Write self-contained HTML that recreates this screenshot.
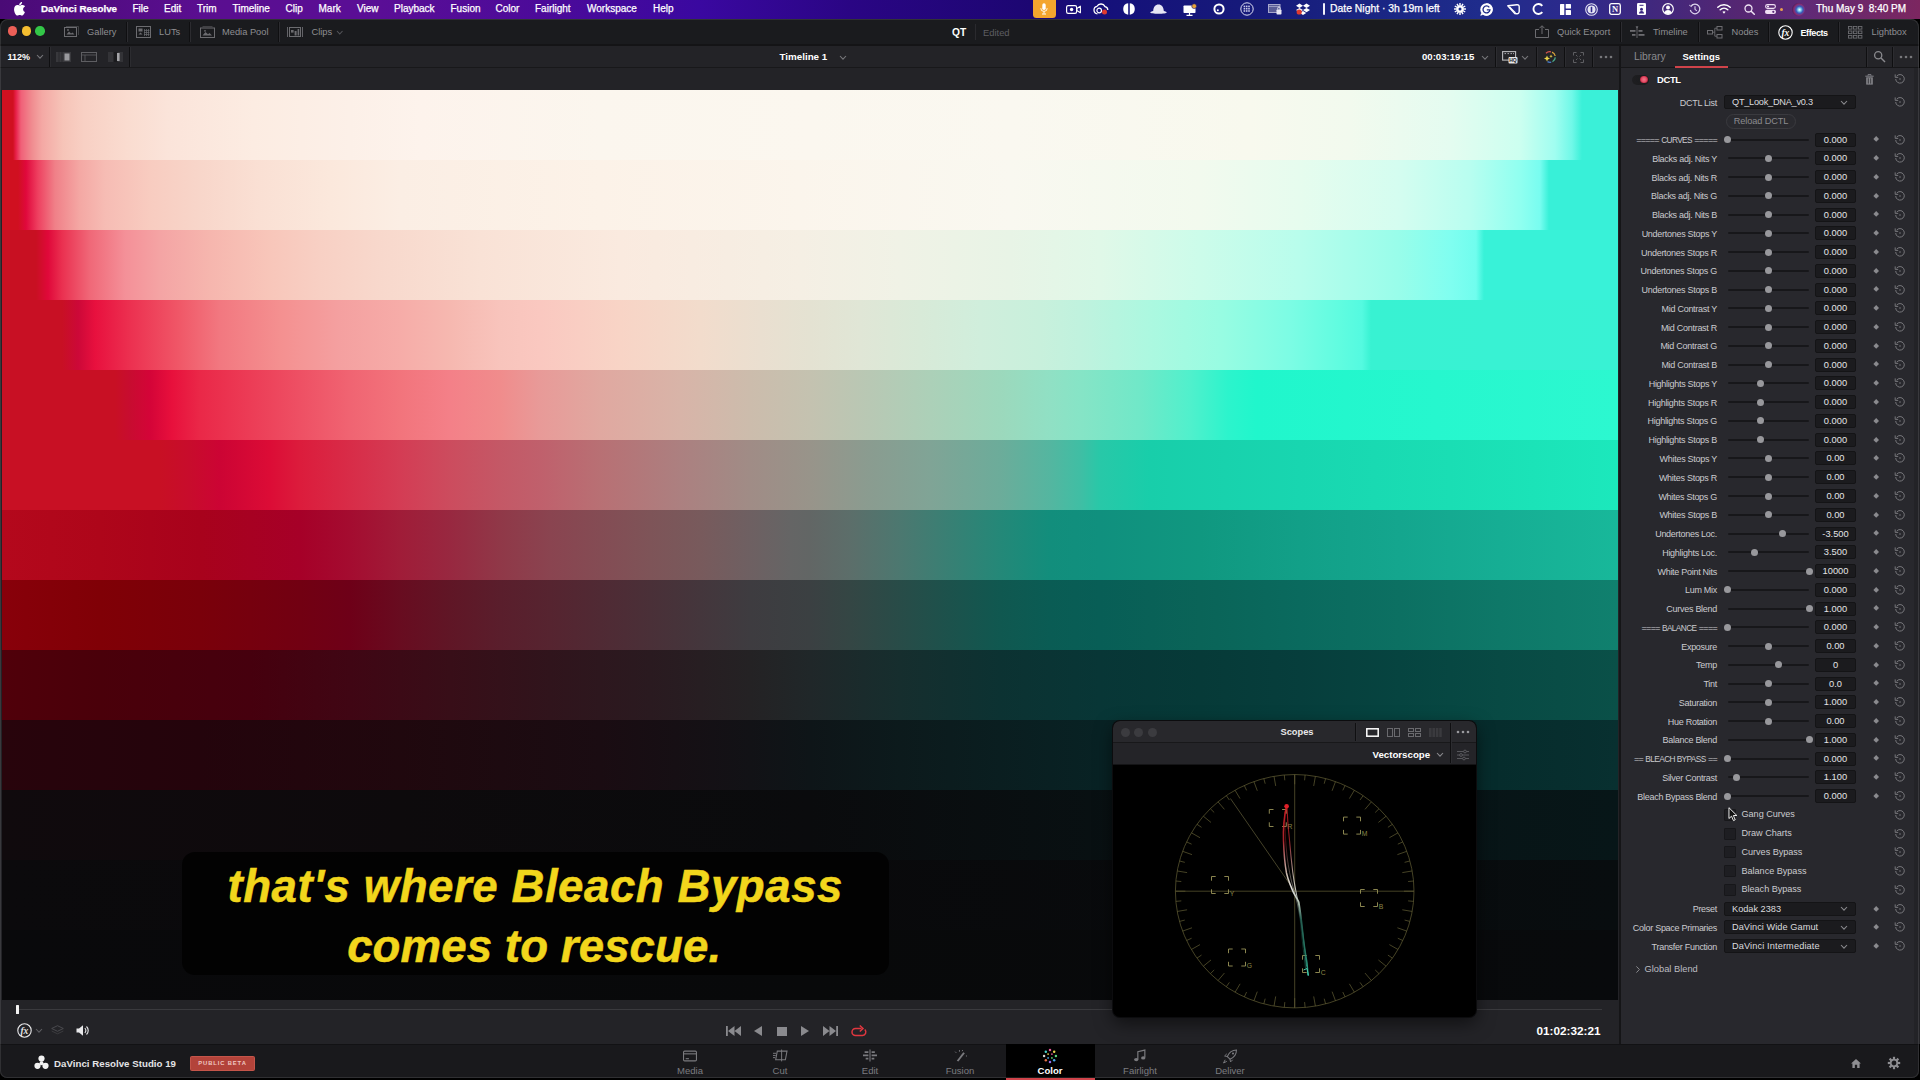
<!DOCTYPE html><html lang="en"><head><meta charset="utf-8"><title>DaVinci Resolve</title><style>
*{box-sizing:border-box;margin:0;padding:0}
html,body{width:1920px;height:1080px;overflow:hidden;background:#000}
body{font-family:"Liberation Sans",sans-serif;font-size:9.3px;color:#9a9a9e;position:relative;-webkit-font-smoothing:antialiased}
.abs{position:absolute}
.t{position:absolute;white-space:pre;line-height:1;transform:translateY(-50%)}
.w{color:#fff}
.b{font-weight:bold}
#menubar{position:absolute;left:0;top:0;width:1920px;height:19px;background:linear-gradient(90deg,#4a0a76 0,#5a0e90 200px,#5a0e96 380px,#4a0a9a 560px,#3a08a0 700px,#2a0584 850px,#1c0672 1030px,#15107a 1100px,#161a7a 1250px,#1a2684 1380px,#1f2c8c 1480px,#2c2a8c 1570px,#40287e 1650px,#552672 1740px,#5e2a78 1800px,#702868 1870px,#7c2660 1920px)}
#menubar .t{color:#fff;font-size:10px;top:9px;-webkit-text-stroke:0.25px #fff}
#win{position:absolute;left:0;top:19px;width:1919px;height:1059px;background:#1a1b1e;border-radius:8px 8px 7px 7px;overflow:hidden}
#winb{position:absolute;left:0;top:19px;width:1919px;height:1059px;border-radius:8px 8px 7px 7px;box-shadow:inset 0 0 0 1px rgba(255,255,255,0.10);pointer-events:none}
#row1{position:absolute;left:0;top:0;width:1920px;height:25px;background:#1a1b1e}
#row2{position:absolute;left:0;top:24.5px;width:1920px;height:24.5px;background:#232327;border-top:2px solid #141416;border-bottom:1px solid #18181a}
#viewbg{position:absolute;left:0;top:49px;width:1620px;height:976px;background:#232327}
#panel{position:absolute;left:1619px;top:49px;width:301px;height:976px;background:#28282d;border-left:2px solid #151517}
#panelhead{position:absolute;left:1619px;top:24.5px;width:301px;height:24.5px;background:#242428;border-left:2px solid #151517;border-top:2px solid #141416;border-bottom:1px solid #161618}
#bottom{position:absolute;left:0;top:1024.5px;width:1920px;height:36px;background:#19191c;border-top:1px solid #121214}
.sep{position:absolute;width:1px;background:#0f0f11;box-shadow:1px 0 0 #2c2c30}
.band{position:absolute;left:2px;width:1616px;height:70px}
.lbl{position:absolute;white-space:pre;line-height:1;transform:translateY(-50%);right:203px;color:#cbcbcf;font-size:9px;letter-spacing:-0.28px;text-align:right}
.trk{position:absolute;left:1728px;width:81px;height:2px;background:#17171a;border-radius:1px}
.knob{position:absolute;width:7px;height:7px;border-radius:50%;background:#98989c}
.val{position:absolute;left:1815px;width:41px;height:14px;background:#1b1b1e;border:1px solid #141416;border-radius:2px;color:#e4e4e6;font-size:9.3px;text-align:center;line-height:12px}
.dia{position:absolute;left:1874.3px;width:4.4px;height:4.4px;background:#8a8a8e;transform:rotate(45deg)}
.dd{position:absolute;left:1724px;width:132px;height:14px;background:#1b1b1e;border:1px solid #141416;border-radius:2px;color:#dcdcde;font-size:9.2px;line-height:12px;padding-left:7px;white-space:pre;letter-spacing:-0.1px}
.cb{position:absolute;left:1724px;width:12px;height:12px;background:#1e1e22;border:1px solid #17171a;border-radius:1px}
.cbl{position:absolute;white-space:pre;line-height:1;transform:translateY(-50%);left:1741.5px;color:#cbcbcf;font-size:9.1px;letter-spacing:-0.02px}
svg{position:absolute;overflow:visible}
.tab{position:absolute;top:1025px;width:90px;height:36px}
.tab .t{left:50%;transform:translate(-50%,-50%);top:27px;font-size:9.5px;color:#77777b}
</style></head><body>
<div id="menubar">
<svg style="left:14px;top:2px" width="12" height="14" viewBox="0 0 170 200"><path fill="#fff" d="M150 68c-1 1-21 12-21 37 0 29 25 39 26 39 0 1-4 14-13 27-8 12-17 23-30 23s-16-8-31-8c-15 0-20 8-32 8s-21-11-30-24C8 153 0 127 0 103c0-39 25-60 50-60 13 0 24 9 33 9 8 0 20-9 35-9 6 0 26 1 40 20zM104 31c6-7 11-17 11-28 0-1 0-3-1-4-10 0-23 7-30 15-6 7-11 17-11 28 0 2 0 3 1 4h2c9 0 21-6 28-15z"/></svg>
<span class="t b" style="left:41px;font-size:9.8px">DaVinci Resolve</span>
<span class="t" style="left:132.5px;">File</span>
<span class="t" style="left:164px;">Edit</span>
<span class="t" style="left:197px;">Trim</span>
<span class="t" style="left:232.5px;">Timeline</span>
<span class="t" style="left:285.5px;">Clip</span>
<span class="t" style="left:318.5px;">Mark</span>
<span class="t" style="left:357px;">View</span>
<span class="t" style="left:394px;">Playback</span>
<span class="t" style="left:450.5px;">Fusion</span>
<span class="t" style="left:495.5px;">Color</span>
<span class="t" style="left:535px;">Fairlight</span>
<span class="t" style="left:587px;">Workspace</span>
<span class="t" style="left:653px;">Help</span>
<div class="abs" style="left:1033px;top:0;width:22.5px;height:17.5px;border-radius:0 0 3.5px 3.5px;background:#f4a52e"></div>
<svg style="left:1040.0px;top:2.8px" width="8" height="12" viewBox="0 0 8 12"><rect x="2.3" y="0.3" width="3.4" height="6.6" rx="1.7" fill="#fff"/><path d="M0.8 5.2A3.200 3.200 0 0 0 7.200 5.200" fill="none" stroke="#fff" stroke-width="0.9"/><path d="M4 8.500V10.500M2 11H6" stroke="#fff" stroke-width="1"/></svg>
<svg style="left:1065.5px;top:4.5px" width="15" height="9" viewBox="0 0 15 9"><rect x="0.6" y="0.6" width="10" height="7.8" rx="1.6" fill="none" stroke="#fff" stroke-width="1.2"/><path d="M10.800 3.500L14.400 1.200V7.800L10.800 5.500Z" fill="none" stroke="#fff" stroke-width="1.1" stroke-linejoin="round"/><circle cx="5.600" cy="4.500" r="1.700" fill="#fff"/></svg>
<svg style="left:1093.0px;top:3.5px" width="16" height="11" viewBox="0 0 16 11"><path d="M4.500 9.800A3.800 3.800 0 0 1 4 2.300A4.500 4.500 0 0 1 12 2.600A3.500 3.500 0 0 1 14.800 6" fill="none" stroke="#fff" stroke-width="1.300"/><circle cx="6.200" cy="6.500" r="2.300" fill="none" stroke="#fff" stroke-width="1.200"/><circle cx="11.500" cy="8" r="2.500" fill="#e03a2e"/></svg>
<svg style="left:1122.8px;top:3.0px" width="12" height="12" viewBox="0 0 12 12"><path d="M5.200 0.300A5.750 5.750 0 0 0 5.200 11.700ZM6.800 0.300A5.750 5.750 0 0 1 6.800 11.700Z" fill="#fff"/></svg>
<svg style="left:1149.9px;top:4.3px" width="17" height="10" viewBox="0 0 17 10"><path d="M3.200 7C3.200 3 5.500 0.400 8.500 0.400S13.800 3 13.800 7C15.500 7.300 16.700 7.900 16.700 8.500C16.700 9.300 13 9.800 8.500 9.800S0.300 9.300 0.300 8.500C0.300 7.900 1.500 7.300 3.200 7Z" fill="#e6e6f4"/></svg>
<svg style="left:1182.5px;top:3.5px" width="14" height="12" viewBox="0 0 14 12"><rect x="0.500" y="1.500" width="12" height="7.500" rx="0.800" fill="#fff"/><path d="M6.500 9V11M3.500 11.300H9.500" stroke="#fff" stroke-width="1.200"/><circle cx="11.200" cy="2.200" r="2.400" fill="#e8a43a" stroke="#1a1470" stroke-width="0.600"/></svg>
<svg style="left:1212.8px;top:3.0px" width="12" height="12" viewBox="0 0 12 12"><circle cx="6" cy="6" r="4.600" fill="none" stroke="#fff" stroke-width="2"/><circle cx="4.800" cy="7.200" r="1" fill="#fff"/></svg>
<svg style="left:1240.0px;top:2.0px" width="14" height="14" viewBox="0 0 14 14"><circle cx="7" cy="7" r="6.200" fill="none" stroke="#e0e0f4" stroke-width="1"/><rect x="3.6" y="3.6" width="1.600" height="1.600" fill="#c8c8e8"/><rect x="5.9" y="3.6" width="1.600" height="1.600" fill="#c8c8e8"/><rect x="8.2" y="3.6" width="1.600" height="1.600" fill="#c8c8e8"/><rect x="3.6" y="5.9" width="1.600" height="1.600" fill="#c8c8e8"/><rect x="5.9" y="5.9" width="1.600" height="1.600" fill="#c8c8e8"/><rect x="8.2" y="5.9" width="1.600" height="1.600" fill="#c8c8e8"/><rect x="3.6" y="8.2" width="1.600" height="1.600" fill="#c8c8e8"/><rect x="5.9" y="8.2" width="1.600" height="1.600" fill="#c8c8e8"/><rect x="8.2" y="8.2" width="1.600" height="1.600" fill="#c8c8e8"/></svg>
<svg style="left:1267.5px;top:3.5px" width="14" height="11" viewBox="0 0 14 11"><rect x="0.500" y="0.500" width="11.500" height="8" fill="#5a5c96" stroke="#a8a8cc" stroke-width="1"/><path d="M0.500 2.500H12" stroke="#a8a8cc" stroke-width="0.800"/><rect x="8.500" y="5.500" width="5" height="5" rx="0.800" fill="#e8e8f4"/><path d="M9.700 5.500V4.300A1.300 1.300 0 0 1 12.300 4.300V5.500" fill="none" stroke="#e8e8f4" stroke-width="0.900"/></svg>
<svg style="left:1296.4px;top:3.0px" width="14" height="12" viewBox="0 0 14 12"><path d="M3.500 0.500L7 2.700L3.500 4.900L0 2.700ZM10.500 0.500L14 2.700L10.500 4.900L7 2.700ZM3.500 4.900L7 7.100L3.500 9.300L0 7.100ZM10.500 4.900L14 7.100L10.500 9.300L7 7.100ZM7 7.900L10.200 9.900L7 11.900L3.800 9.900Z" fill="#fff"/><circle cx="3.200" cy="9" r="2.600" fill="#e03a2e"/></svg>
<div class="abs" style="left:1322.5px;top:3px;width:2.600px;height:12px;border-radius:1.200px;background:#f0f0fa"></div>
<svg style="left:1454.3px;top:3.0px" width="12" height="12" viewBox="0 0 12 12"><rect x="5.300" y="0" width="1.400" height="3" fill="#fff" transform="rotate(0 6 6)"/><rect x="5.300" y="0" width="1.400" height="3" fill="#fff" transform="rotate(30 6 6)"/><rect x="5.300" y="0" width="1.400" height="3" fill="#fff" transform="rotate(60 6 6)"/><rect x="5.300" y="0" width="1.400" height="3" fill="#fff" transform="rotate(90 6 6)"/><rect x="5.300" y="0" width="1.400" height="3" fill="#fff" transform="rotate(120 6 6)"/><rect x="5.300" y="0" width="1.400" height="3" fill="#fff" transform="rotate(150 6 6)"/><rect x="5.300" y="0" width="1.400" height="3" fill="#fff" transform="rotate(180 6 6)"/><rect x="5.300" y="0" width="1.400" height="3" fill="#fff" transform="rotate(210 6 6)"/><rect x="5.300" y="0" width="1.400" height="3" fill="#fff" transform="rotate(240 6 6)"/><rect x="5.300" y="0" width="1.400" height="3" fill="#fff" transform="rotate(270 6 6)"/><rect x="5.300" y="0" width="1.400" height="3" fill="#fff" transform="rotate(300 6 6)"/><rect x="5.300" y="0" width="1.400" height="3" fill="#fff" transform="rotate(330 6 6)"/><circle cx="6" cy="6" r="3.600" fill="#fff"/><circle cx="6" cy="6" r="1.500" fill="#1c2a88"/></svg>
<svg style="left:1479.5px;top:2.5px" width="13" height="13" viewBox="0 0 13 13"><path d="M6.500 0.300A6.200 6.200 0 1 1 1.200 9.700L0.300 12.700L3.300 11.800" fill="#fff"/><circle cx="6.500" cy="6.500" r="6.200" fill="#fff"/><path d="M9.300 4.300A3.500 3.500 0 1 0 10 6.800H6.800" fill="none" stroke="#1c2a88" stroke-width="1.300"/></svg>
<svg style="left:1506.9px;top:3.5px" width="13" height="11" viewBox="0 0 13 11"><path d="M0.800 1.800L10 0.800Q12.300 0.700 12.200 3V7.500Q12 10 9.800 9.800L7.800 9.600Z" fill="none" stroke="#fff" stroke-width="1.400" stroke-linejoin="round"/><path d="M2.500 3L8.500 9" stroke="#fff" stroke-width="1.300"/></svg>
<svg style="left:1532.0px;top:3.0px" width="12" height="12" viewBox="0 0 12 12"><path d="M10.300 2.800A5 5 0 1 0 10.300 9.200" fill="none" stroke="#fff" stroke-width="1.900"/></svg>
<svg style="left:1559.8px;top:3.5px" width="11" height="11" viewBox="0 0 11 11"><rect x="0" y="0" width="4.300" height="11" rx="0.600" fill="#fff"/><rect x="5.700" y="0" width="5.300" height="4.600" rx="0.600" fill="#fff"/><rect x="5.700" y="6" width="5.300" height="5" rx="0.600" fill="#fff"/></svg>
<svg style="left:1584.8px;top:2.5px" width="13" height="13" viewBox="0 0 13 13"><circle cx="6.500" cy="6.500" r="5.800" fill="none" stroke="#e4e4f4" stroke-width="1.100"/><circle cx="6.500" cy="6.500" r="4" fill="#e4e4f4"/><rect x="5.700" y="3.800" width="1.600" height="5.400" rx="0.600" fill="#30288a"/></svg>
<svg style="left:1609.3px;top:3.0px" width="12" height="12" viewBox="0 0 12 12"><rect x="0.700" y="0.700" width="10.600" height="10.600" rx="1.800" fill="none" stroke="#fff" stroke-width="1.300"/><text x="6" y="9.200" text-anchor="middle" font-family="Liberation Serif,serif" font-weight="bold" font-size="8.500" fill="#fff">N</text></svg>
<svg style="left:1637.1px;top:3.0px" width="9" height="12" viewBox="0 0 9 12"><rect x="0" y="0" width="9" height="12" rx="1.200" fill="#fff"/><circle cx="4.500" cy="6.300" r="1.500" fill="#3a2884"/><path d="M2 10.500A2.500 2.500 0 0 1 7 10.500Z" fill="#3a2884"/><rect x="2.500" y="1.800" width="4" height="1" fill="#3a2884"/></svg>
<svg style="left:1661.7px;top:3.0px" width="12" height="12" viewBox="0 0 12 12"><circle cx="6" cy="6" r="5.300" fill="none" stroke="#fff" stroke-width="1.200"/><circle cx="6" cy="4.600" r="2" fill="#fff"/><path d="M2.300 9.500A4 4 0 0 1 9.700 9.500A5.300 5.300 0 0 1 2.300 9.500Z" fill="#fff"/></svg>
<svg style="left:1688.7px;top:3.0px" width="12" height="12" viewBox="0 0 12 12"><path d="M2.200 3A4.800 4.800 0 1 1 1.300 7" fill="none" stroke="#dcd4ec" stroke-width="1.200"/><path d="M0.300 2.200L2.400 3.600L3.400 1.300" fill="none" stroke="#dcd4ec" stroke-width="1"/><path d="M6 3.300V6.300L7.800 7.800" fill="none" stroke="#dcd4ec" stroke-width="1.100"/></svg>
<svg style="left:1716.6px;top:4.3px" width="14" height="10" viewBox="0 0 14 10"><path d="M0.800 3.300A9 9 0 0 1 13.200 3.300" fill="none" stroke="#fff" stroke-width="1.500" stroke-linecap="round"/><path d="M3.200 5.700A5.600 5.600 0 0 1 10.800 5.700" fill="none" stroke="#fff" stroke-width="1.500" stroke-linecap="round"/><path d="M5.400 7.800A2.500 2.500 0 0 1 8.600 7.800L7 9.700Z" fill="#fff"/></svg>
<svg style="left:1744.0px;top:3.5px" width="11" height="11" viewBox="0 0 11 11"><circle cx="4.500" cy="4.500" r="3.500" fill="none" stroke="#f0e4f4" stroke-width="1.300"/><path d="M7.200 7.200L10.300 10.300" stroke="#f0e4f4" stroke-width="1.500" stroke-linecap="round"/></svg>
<svg style="left:1765.0px;top:4.0px" width="11" height="10" viewBox="0 0 11 10"><rect x="0.600" y="0.600" width="9.800" height="3.800" rx="1.900" fill="none" stroke="#f0e0f4" stroke-width="1.100"/><circle cx="3" cy="2.500" r="1.100" fill="#f0e0f4"/><rect x="0" y="5.700" width="11" height="4.300" rx="2.100" fill="#f0e0f4"/><circle cx="8.300" cy="7.850" r="1.100" fill="#5a2a78"/></svg>
<div class="abs" style="left:1779.500px;top:7.500px;width:3px;height:3px;border-radius:50%;background:#e8a050"></div>
<div class="abs" style="left:1791.500px;top:2.500px;width:13px;height:13px;border-radius:50%;background:radial-gradient(circle at 58% 52%,#fff 0,#8ad8f0 14%,#3a5ab8 34%,#8a2a70 56%,#2a1850 82%)"></div>
<span class="t" style="left:1330px;font-size:10.4px">Date Night · 3h 19m left</span>
<span class="t" style="left:1816px;font-size:10px">Thu May 9  8:40 PM</span>
</div>
<div id="win">
<div id="row1"></div><div id="row2"></div><div id="viewbg"></div><div id="panelhead"></div><div id="panel"></div>
<div class="band" style="top:71px;background:linear-gradient(90deg,#d01020 0px,#d01020 11px,#e8204a 14px,#f06078 19px,#f08c90 30px,#f4a8a4 40px,#f6c4b8 61px,#f8d0c4 82px,#fadcd0 125px,#fbe4da 167px,#fcece2 251px,#fcf0e8 348px,#fdf3ec 418px,#fbf6ee 598px,#fbf7ef 808px,#faf8f0 1008px,#f8f9ee 1248px,#f2faee 1348px,#e4fcf0 1448px,#ccfff0 1518px,#a0fdf0 1553px,#70f8e8 1570px,#3af0d8 1580px,#3af0d8 1615px)"></div>
<div class="band" style="top:141px;background:linear-gradient(90deg,#d01020 0px,#d01020 16px,#e0083c 24px,#ee4060 36px,#f08088 53px,#f4a8a4 78px,#f6bcb4 103px,#f8ccc0 148px,#f8d6ca 198px,#fae0d4 258px,#fbe8dc 328px,#fbeee4 398px,#fcf2e8 598px,#fbf5ec 798px,#f9f8f0 1008px,#f2faee 1198px,#e6fcee 1298px,#d4fdf0 1398px,#b8fef0 1468px,#90fff0 1518px,#78fdf0 1538px,#38f0d8 1547px,#38f0d8 1615px)"></div>
<div class="band" style="top:211px;background:linear-gradient(90deg,#c81022 0px,#c81022 34px,#e0083a 46px,#ea3050 60px,#f06878 88px,#f49098 123px,#f4a4a4 158px,#f6b6ae 208px,#f8c6ba 268px,#f8d0c4 318px,#f8d8cc 378px,#f9e2d6 478px,#faeadf 618px,#f5efe4 798px,#f0f2e6 898px,#e8f4e6 1008px,#e0f8e8 1098px,#ccfcea 1198px,#b8fdec 1298px,#98fdea 1398px,#80fef0 1448px,#70fdee 1474px,#38f2d8 1482px,#38f2d8 1615px)"></div>
<div class="band" style="top:281px;background:linear-gradient(90deg,#c81024 0px,#c81024 60px,#cc0838 76px,#e8103e 93px,#ec3050 128px,#f05868 178px,#f27880 218px,#f49090 278px,#f4a0a0 338px,#f6aca8 398px,#f6b8b0 448px,#f8c4bc 498px,#fac8c0 538px,#f8d4c6 618px,#f2dccc 698px,#eadfd0 758px,#e4e2d2 808px,#e0e6d6 858px,#d8ead8 918px,#d0eedc 978px,#c8f0dc 1038px,#c0f2de 1078px,#acf8e0 1148px,#98fce2 1218px,#7cfce4 1288px,#60fce0 1338px,#54fae0 1360px,#38f2d2 1369px,#38f2d4 1615px)"></div>
<div class="band" style="top:351px;background:linear-gradient(90deg,#c81024 0px,#c81024 113px,#c80c30 128px,#d40438 148px,#e8103c 170px,#ea2848 198px,#ec3c56 248px,#ee5064 298px,#f06472 348px,#f2747c 398px,#f48088 448px,#f08c8c 498px,#e89a98 538px,#e0a8a0 598px,#d8b4a8 678px,#ccbcac 748px,#c4c2b0 808px,#b8c8b4 868px,#acd0b8 928px,#9cd8bc 998px,#90e0c4 1048px,#86e4c6 1078px,#70e8c8 1138px,#50f0cc 1188px,#2cf4cc 1226px,#20f6cc 1254px,#2cf8d0 1615px)"></div>
<div class="band" style="top:421px;background:linear-gradient(90deg,#c81024 0px,#c81024 158px,#c80c2c 188px,#cc0434 218px,#dc0c36 268px,#dc1c3c 298px,#d82c48 348px,#d43c54 398px,#cc4c5e 448px,#c45866 498px,#c0606c 538px,#b87074 598px,#ac8080 678px,#a08c86 748px,#98948a 808px,#8a9c90 868px,#80a496 928px,#6cac9a 998px,#54b6a0 1048px,#40bea4 1078px,#28c8a8 1098px,#18ceaa 1148px,#18d6b0 1298px,#1adeb4 1448px,#1ce8bc 1615px)"></div>
<div class="band" style="top:491px;background:linear-gradient(90deg,#b4081c 0px,#ae061a 98px,#a8021c 198px,#a60028 298px,#a40c30 348px,#a01c38 398px,#982840 448px,#903848 498px,#8a4450 548px,#844c54 598px,#7e5458 648px,#785a5c 698px,#6e6062 748px,#656565 788px,#626665 808px,#5c6e6a 848px,#4c7870 898px,#388074 948px,#248878 998px,#128e7c 1048px,#10907e 1098px,#109880 1198px,#12a088 1298px,#14a68e 1398px,#16ae94 1498px,#18b89a 1615px)"></div>
<div class="band" style="top:561px;background:linear-gradient(90deg,#88000a 0px,#800006 98px,#7a000a 198px,#720012 298px,#6e0018 348px,#680c20 398px,#601626 448px,#5a1e2c 498px,#562430 548px,#502a34 598px,#4a3038 648px,#44363c 698px,#3e3c40 748px,#3b4042 808px,#344644 848px,#284c48 898px,#1c524c 948px,#105850 998px,#0a5c54 1048px,#085e56 1098px,#0a6458 1198px,#0a6a5e 1298px,#0c7062 1398px,#0e7868 1498px,#10806e 1615px)"></div>
<div class="band" style="top:631px;background:linear-gradient(90deg,#50000a 0px,#4a000a 98px,#46000e 248px,#400614 348px,#380e18 448px,#30141c 548px,#2a1a20 648px,#242224 748px,#202729 808px,#162e2e 898px,#0c3232 998px,#083636 1098px,#063a38 1198px,#063e3c 1298px,#064440 1398px,#084a44 1498px,#0a5048 1615px)"></div>
<div class="band" style="top:701px;background:linear-gradient(90deg,#28040c 0px,#24040c 198px,#20080e 398px,#1a0c12 598px,#121216 748px,#0e1518 808px,#0c1a1c 898px,#0a1e20 998px,#082224 1098px,#082628 1198px,#062c2c 1498px,#083030 1615px)"></div>
<div class="band" style="top:771px;background:linear-gradient(90deg,#100a0d 0px,#0d0a0c 398px,#0a0b0d 808px,#081214 1198px,#071618 1615px)"></div>
<div class="band" style="top:841px;background:linear-gradient(90deg,#0b0a0c 0px,#09090b 808px,#080d0f 1615px)"></div>
<div class="band" style="top:911px;background:linear-gradient(90deg,#09090b 0px,#08090a 808px,#080a0c 1615px)"></div>
<!--VIEWER-OVERLAYS-->
<div id="bottom"></div>
</div>
<div class="abs" style="left:7.7px;top:26.2px;width:9.6px;height:9.6px;border-radius:50%;background:#ec5f57"></div>
<div class="abs" style="left:21.5px;top:26.2px;width:9.6px;height:9.6px;border-radius:50%;background:#f4bd30"></div>
<div class="abs" style="left:35.2px;top:26.2px;width:9.6px;height:9.6px;border-radius:50%;background:#33c748"></div>
<svg style="left:64px;top:26px" width="15" height="12" viewBox="0 0 15 12"><rect x="0.5" y="1.5" width="12" height="9" fill="none" stroke="#6c6c70"/><path d="M2 0.5H14.5V9" fill="none" stroke="#6c6c70" stroke-width="0.8" opacity=".6"/><path d="M2.5 8.5L5 5.5L7 7.5L8.5 6.5L10.5 8.5Z" fill="#6c6c70"/><circle cx="4" cy="4" r="0.9" fill="#6c6c70"/></svg>
<span class="t" style="left:87px;top:32.5px;color:#8e8e92">Gallery</span>
<div class="sep" style="left:126px;top:22px;height:20px"></div>
<svg style="left:136px;top:26px" width="15" height="12" viewBox="0 0 15 12"><rect x="0.5" y="0.5" width="14" height="11" fill="none" stroke="#6c6c70"/><rect x="2.5" y="2.5" width="4" height="3" fill="#6c6c70"/><path d="M2.5 8.5L4.5 6.5L6.5 8.5Z" fill="#6c6c70"/><path d="M8.5 3V10M10.5 3V10M12.5 3V10M8 4.5H13.5M8 6.5H13.5M8 8.5H13.5" stroke="#6c6c70" stroke-width="0.7"/></svg>
<span class="t" style="left:159px;top:32.5px;color:#8e8e92">LUTs</span>
<div class="sep" style="left:189px;top:22px;height:20px"></div>
<svg style="left:200px;top:26px" width="15" height="12" viewBox="0 0 15 12"><path d="M2.5 0.5H12.5" stroke="#6c6c70" stroke-width="0.8" opacity=".6"/><rect x="0.5" y="2" width="14" height="9.5" fill="none" stroke="#6c6c70"/><path d="M2.5 9.5L5.5 6L8 8.3L9.5 7L12 9.5Z" fill="#6c6c70"/><circle cx="5" cy="4.8" r="0.9" fill="#6c6c70"/></svg>
<span class="t" style="left:222px;top:32.5px;color:#8e8e92">Media Pool</span>
<div class="sep" style="left:278px;top:22px;height:20px"></div>
<svg style="left:287px;top:26px" width="16" height="12" viewBox="0 0 16 12"><path d="M0.5 1V11M15.5 1V11" stroke="#6c6c70" stroke-width="0.9"/><rect x="2.5" y="1.5" width="11" height="9" fill="none" stroke="#6c6c70"/><rect x="4" y="4" width="2.6" height="2.6" fill="#6c6c70"/><rect x="7.6" y="5" width="2" height="4.5" fill="#6c6c70"/><rect x="10.6" y="3" width="1.6" height="6.5" fill="#6c6c70"/></svg>
<span class="t" style="left:311.5px;top:32.5px;color:#8e8e92">Clips</span>
<svg style="left:337.25px;top:31.299999999999997px" width="5.5" height="3" viewBox="0 0 5.5 3"><path d="M0 0L2.75 3L5.5 0" fill="none" stroke="#55555a" stroke-width="1.1"/></svg>
<span class="t b w" style="left:952px;top:32.5px;font-size:10.2px">QT</span>
<div class="abs" style="left:975px;top:24px;width:1px;height:16px;background:#2a2a2e"></div>
<span class="t" style="left:983px;top:32.5px;color:#5e5e62;font-size:9.4px">Edited</span>
<svg style="left:1534.5px;top:25px" width="14" height="13" viewBox="0 0 14 13"><path d="M4 4.5H0.5V12.5H13.5V4.5H10" fill="none" stroke="#6c6c70"/><path d="M7 9V1M4.5 3.2L7 0.7L9.5 3.2" fill="none" stroke="#6c6c70"/></svg>
<span class="t" style="left:1557px;top:32.5px;color:#8e8e92">Quick Export</span>
<div class="sep" style="left:1620px;top:22px;height:20px"></div>
<svg style="left:1629px;top:26px" width="16" height="12" viewBox="0 0 16 12"><path d="M8 0V12" stroke="#6c6c70" stroke-width="0.9"/><path d="M6.5 0.5H9.5L8 2.5Z" fill="#6c6c70"/><rect x="1" y="4" width="5.5" height="1.8" fill="#6c6c70"/><rect x="9.5" y="4" width="4" height="1.8" fill="#6c6c70"/><rect x="3" y="8" width="3.5" height="1.8" fill="#6c6c70"/><rect x="9.5" y="8" width="6" height="1.8" fill="#6c6c70"/></svg>
<span class="t" style="left:1653px;top:32.5px;color:#8e8e92">Timeline</span>
<div class="sep" style="left:1698px;top:22px;height:20px"></div>
<svg style="left:1707px;top:25.5px" width="16" height="13" viewBox="0 0 16 13"><rect x="0.5" y="4.5" width="5" height="3.5" fill="none" stroke="#6c6c70"/><rect x="10" y="0.5" width="5" height="3.5" fill="none" stroke="#6c6c70"/><rect x="10" y="8.5" width="5" height="3.5" fill="none" stroke="#6c6c70"/><path d="M5.5 6.2H7.8V2.2H10M7.8 6.2V10.2H10" fill="none" stroke="#6c6c70" stroke-width="0.9"/></svg>
<span class="t" style="left:1731.5px;top:32.5px;color:#8e8e92">Nodes</span>
<div class="sep" style="left:1768px;top:22px;height:20px"></div>
<svg style="left:1777.5px;top:25px" width="15" height="15" viewBox="0 0 15 15"><circle cx="7.5" cy="7.5" r="6.7" fill="none" stroke="#fff" stroke-width="1.1"/><text x="7.4" y="10.6" text-anchor="middle" font-family="Liberation Serif,serif" font-style="italic" font-weight="bold" font-size="9.5" fill="#fff">fx</text></svg>
<span class="t b w" style="left:1800.5px;top:32.5px;font-size:9px;letter-spacing:-0.4px">Effects</span>
<div class="sep" style="left:1838px;top:22px;height:20px"></div>
<svg style="left:1848px;top:25.5px" width="15" height="13" viewBox="0 0 15 13"><rect x="0.5" y="0.5" width="3.4" height="2.6" fill="none" stroke="#6c6c70" stroke-width="0.9"/><rect x="5.5" y="0.5" width="3.4" height="2.6" fill="none" stroke="#6c6c70" stroke-width="0.9"/><rect x="10.5" y="0.5" width="3.4" height="2.6" fill="none" stroke="#6c6c70" stroke-width="0.9"/><rect x="0.5" y="5.0" width="3.4" height="2.6" fill="none" stroke="#6c6c70" stroke-width="0.9"/><rect x="5.5" y="5.0" width="3.4" height="2.6" fill="none" stroke="#6c6c70" stroke-width="0.9"/><rect x="10.5" y="5.0" width="3.4" height="2.6" fill="none" stroke="#6c6c70" stroke-width="0.9"/><rect x="0.5" y="9.5" width="3.4" height="2.6" fill="none" stroke="#6c6c70" stroke-width="0.9"/><rect x="5.5" y="9.5" width="3.4" height="2.6" fill="none" stroke="#6c6c70" stroke-width="0.9"/><rect x="10.5" y="9.5" width="3.4" height="2.6" fill="none" stroke="#6c6c70" stroke-width="0.9"/></svg>
<span class="t" style="left:1871.5px;top:32.5px;color:#8e8e92">Lightbox</span>
<span class="t b w" style="left:7.5px;top:57px;font-size:9px">112%</span>
<svg style="left:37.0px;top:55.4px" width="6" height="3.2" viewBox="0 0 6 3.2"><path d="M0 0L3.0 3.2L6 0" fill="none" stroke="#77777b" stroke-width="1.1"/></svg>
<div class="sep" style="left:48.5px;top:47px;height:20px"></div>
<svg style="left:56px;top:51.5px" width="15" height="10" viewBox="0 0 15 10"><rect x="0" y="0" width="15" height="10" fill="#38383c"/><path d="M3 0V10M6 0V10" stroke="#232327" stroke-width="0.7"/><rect x="8.5" y="1.5" width="5" height="7" fill="#9a9a9e"/></svg>
<svg style="left:81px;top:51.5px" width="16" height="10" viewBox="0 0 16 10"><rect x="0.5" y="0.5" width="15" height="9" fill="none" stroke="#5e5e62"/><path d="M0.5 3H15.5M4 3V9.5" stroke="#5e5e62" stroke-width="0.8"/></svg>
<svg style="left:108px;top:51.5px" width="15" height="10" viewBox="0 0 15 10"><rect x="0" y="0" width="15" height="10" fill="#333337"/><rect x="5.5" y="0" width="4" height="10" fill="#1a1a1d"/><rect x="9" y="1" width="2.6" height="8" fill="#a4a4a8"/></svg>
<div class="sep" style="left:129px;top:47px;height:20px"></div>
<span class="t b w" style="left:779.5px;top:57px;font-size:9.8px">Timeline 1</span>
<svg style="left:840.0px;top:55.699999999999996px" width="6" height="3.2" viewBox="0 0 6 3.2"><path d="M0 0L3.0 3.2L6 0" fill="none" stroke="#77777b" stroke-width="1.1"/></svg>
<span class="t b w" style="left:1422px;top:57px;font-size:9.6px">00:03:19:15</span>
<svg style="left:1482.0px;top:55.699999999999996px" width="6" height="3.2" viewBox="0 0 6 3.2"><path d="M0 0L3.0 3.2L6 0" fill="none" stroke="#77777b" stroke-width="1.1"/></svg>
<div class="sep" style="left:1495px;top:47px;height:20px"></div>
<svg style="left:1502px;top:50.5px" width="16" height="13" viewBox="0 0 16 13"><rect x="0.6" y="0.6" width="13" height="8.5" fill="none" stroke="#b8b8bc" stroke-width="1.1"/><path d="M2.5 2.6H4M5.5 2.6H7M8.5 2.6H10M11 2.6H12" stroke="#b8b8bc" stroke-width="0.9"/><rect x="6.5" y="6" width="9" height="6.5" rx="1" fill="#e8e8ea"/><text x="11" y="11.3" text-anchor="middle" font-family="Liberation Sans,sans-serif" font-weight="bold" font-size="5" fill="#222">HQ</text></svg>
<svg style="left:1522.0px;top:55.699999999999996px" width="6" height="3.2" viewBox="0 0 6 3.2"><path d="M0 0L3.0 3.2L6 0" fill="none" stroke="#77777b" stroke-width="1.1"/></svg>
<div class="sep" style="left:1536px;top:47px;height:20px"></div>
<svg style="left:1543px;top:50px" width="14" height="14" viewBox="0 0 14 14"><path d="M3 3.2A5.3 5.3 0 0 1 8 1.8" fill="none" stroke="#d9534f" stroke-width="1.3"/><path d="M9 2.1A5.3 5.3 0 0 1 12.2 6" fill="none" stroke="#d8a13a" stroke-width="1.3"/><path d="M12.3 7.4A5.3 5.3 0 0 1 9.5 11.7" fill="none" stroke="#4aa88a" stroke-width="1.3"/><path d="M8.2 12.2A5.3 5.3 0 0 1 4.5 11.6" fill="none" stroke="#4a7fd0" stroke-width="1.3"/><path d="M4 5.5L4.9 7.6L7 8.5L4.9 9.4L4 11.5L3.1 9.4L1 8.5L3.1 7.6Z" fill="#e8d24a"/><path d="M8 4.5L8.5 5.7L9.7 6.2L8.5 6.7L8 7.9L7.5 6.7L6.3 6.2L7.5 5.7Z" fill="#e8d24a"/></svg>
<div class="sep" style="left:1564px;top:47px;height:20px"></div>
<svg style="left:1572.5px;top:51.5px" width="11" height="11" viewBox="0 0 11 11"><path d="M0.5 3.5V0.5H3.5M7.5 0.5H10.5V3.5M10.5 7.5V10.5H7.5M3.5 10.5H0.5V7.5" fill="none" stroke="#5e5e62" stroke-width="1"/><path d="M3 3L4.5 4.5M8 3L6.5 4.5M8 8L6.5 6.5M3 8L4.5 6.5" stroke="#5e5e62" stroke-width="1"/></svg>
<div class="sep" style="left:1592px;top:47px;height:20px"></div>
<svg style="left:1599px;top:55px" width="14" height="4" viewBox="0 0 14 4"><circle cx="2" cy="2" r="1.3" fill="#77777b"/><circle cx="7" cy="2" r="1.3" fill="#77777b"/><circle cx="12" cy="2" r="1.3" fill="#77777b"/></svg>
<span class="t" style="left:1634px;top:56.5px;font-size:10.4px;color:#8a8a8e">Library</span>
<span class="t b w" style="left:1682.5px;top:56.5px;font-size:9.5px">Settings</span>
<div class="abs" style="left:1675px;top:66px;width:53px;height:2px;background:#d0434a"></div>
<div class="sep" style="left:1866px;top:47px;height:20px"></div>
<div class="sep" style="left:1892px;top:47px;height:20px"></div>
<svg style="left:1873px;top:50px" width="13" height="13" viewBox="0 0 13 13"><circle cx="5.2" cy="5.2" r="3.6" fill="none" stroke="#8a8a8e" stroke-width="1.3"/><path d="M8 8L12 12" stroke="#8a8a8e" stroke-width="1.5"/></svg>
<svg style="left:1899px;top:55px" width="14" height="4" viewBox="0 0 14 4"><circle cx="2" cy="2" r="1.3" fill="#77777b"/><circle cx="7" cy="2" r="1.3" fill="#77777b"/><circle cx="12" cy="2" r="1.3" fill="#77777b"/></svg>
<div class="abs" style="left:1632px;top:74.5px;width:17px;height:10px;border-radius:5px;background:linear-gradient(90deg,#1e1e21,#1a1a1c)"></div>
<div class="abs" style="left:1640px;top:75.7px;width:7.6px;height:7.6px;border-radius:50%;background:radial-gradient(circle,#f0788a 0,#e8506a 45%,#b02038 75%,#601020 100%)"></div>
<span class="t b w" style="left:1657px;top:79.6px;font-size:9.4px;letter-spacing:-0.3px">DCTL</span>
<svg style="left:1865px;top:74px" width="9" height="11" viewBox="0 0 9 11"><path d="M0.3 2.200H8.700" stroke="#85858a" stroke-width="1"/><path d="M3 1.700V0.600H6V1.700" fill="none" stroke="#85858a" stroke-width="0.900"/><path d="M1.200 3.300H7.800V10.600H1.200Z" fill="#85858a"/><path d="M3.300 4.300V9.600M5.700 4.300V9.600" stroke="#28282d" stroke-width="0.800"/></svg>
<svg style="left:1893.5px;top:73px" width="12" height="12" viewBox="0 0 12 12"><path d="M2.6 3.2A4.3 4.3 0 1 1 1.7 6" fill="none" stroke="#77777b" stroke-width="1"/><path d="M1.2 1.4V4.4H4.2" fill="none" stroke="#77777b" stroke-width="1"/><circle cx="6" cy="6" r="0.8" fill="#77777b"/></svg>
<span class="lbl" style="top:102.5px">DCTL List</span>
<div class="dd" style="top:95.0px;letter-spacing:-0.25px">QT_Look_DNA_v0.3</div>
<svg style="left:1841.0px;top:100.7px" width="6" height="3.2" viewBox="0 0 6 3.2"><path d="M0 0L3.0 3.2L6 0" fill="none" stroke="#8a8a8e" stroke-width="1.1"/></svg>
<svg style="left:1893.5px;top:96.0px" width="12" height="12" viewBox="0 0 12 12"><path d="M2.6 3.2A4.3 4.3 0 1 1 1.7 6" fill="none" stroke="#77777b" stroke-width="1"/><path d="M1.2 1.4V4.4H4.2" fill="none" stroke="#77777b" stroke-width="1"/><circle cx="6" cy="6" r="0.8" fill="#77777b"/></svg>
<div class="abs" style="left:1726px;top:113.96000000000001px;width:70px;height:15px;border:1px solid #3a3a3f;border-radius:7.5px;background:#2a2a2f;color:#8c8c90;font-size:9.2px;line-height:13px;text-align:center;letter-spacing:-0.1px">Reload DCTL</div>
<span class="lbl" style="top:140.0px"><span style='letter-spacing:-0.7px'>=====</span> <span style='font-size:8.3px;letter-spacing:-0.6px'>CURVES</span> <span style='letter-spacing:-0.7px'>=====</span></span>
<div class="trk" style="top:138.5px"></div>
<div class="knob" style="left:1723.9px;top:136.0px"></div>
<div class="val" style="top:132.5px">0.000</div>
<div class="dia" style="top:137.3px"></div>
<svg style="left:1893.5px;top:133.5px" width="12" height="12" viewBox="0 0 12 12"><path d="M2.6 3.2A4.3 4.3 0 1 1 1.7 6" fill="none" stroke="#77777b" stroke-width="1"/><path d="M1.2 1.4V4.4H4.2" fill="none" stroke="#77777b" stroke-width="1"/><circle cx="6" cy="6" r="0.8" fill="#77777b"/></svg>
<span class="lbl" style="top:158.8px">Blacks adj. Nits Y</span>
<div class="trk" style="top:157.3px"></div>
<div class="knob" style="left:1765.2px;top:154.8px"></div>
<div class="val" style="top:151.3px">0.000</div>
<div class="dia" style="top:156.1px"></div>
<svg style="left:1893.5px;top:152.3px" width="12" height="12" viewBox="0 0 12 12"><path d="M2.6 3.2A4.3 4.3 0 1 1 1.7 6" fill="none" stroke="#77777b" stroke-width="1"/><path d="M1.2 1.4V4.4H4.2" fill="none" stroke="#77777b" stroke-width="1"/><circle cx="6" cy="6" r="0.8" fill="#77777b"/></svg>
<span class="lbl" style="top:177.5px">Blacks adj. Nits R</span>
<div class="trk" style="top:176.0px"></div>
<div class="knob" style="left:1765.2px;top:173.5px"></div>
<div class="val" style="top:170.0px">0.000</div>
<div class="dia" style="top:174.8px"></div>
<svg style="left:1893.5px;top:171.0px" width="12" height="12" viewBox="0 0 12 12"><path d="M2.6 3.2A4.3 4.3 0 1 1 1.7 6" fill="none" stroke="#77777b" stroke-width="1"/><path d="M1.2 1.4V4.4H4.2" fill="none" stroke="#77777b" stroke-width="1"/><circle cx="6" cy="6" r="0.8" fill="#77777b"/></svg>
<span class="lbl" style="top:196.3px">Blacks adj. Nits G</span>
<div class="trk" style="top:194.8px"></div>
<div class="knob" style="left:1765.2px;top:192.3px"></div>
<div class="val" style="top:188.8px">0.000</div>
<div class="dia" style="top:193.6px"></div>
<svg style="left:1893.5px;top:189.8px" width="12" height="12" viewBox="0 0 12 12"><path d="M2.6 3.2A4.3 4.3 0 1 1 1.7 6" fill="none" stroke="#77777b" stroke-width="1"/><path d="M1.2 1.4V4.4H4.2" fill="none" stroke="#77777b" stroke-width="1"/><circle cx="6" cy="6" r="0.8" fill="#77777b"/></svg>
<span class="lbl" style="top:215.1px">Blacks adj. Nits B</span>
<div class="trk" style="top:213.6px"></div>
<div class="knob" style="left:1765.2px;top:211.1px"></div>
<div class="val" style="top:207.6px">0.000</div>
<div class="dia" style="top:212.4px"></div>
<svg style="left:1893.5px;top:208.6px" width="12" height="12" viewBox="0 0 12 12"><path d="M2.6 3.2A4.3 4.3 0 1 1 1.7 6" fill="none" stroke="#77777b" stroke-width="1"/><path d="M1.2 1.4V4.4H4.2" fill="none" stroke="#77777b" stroke-width="1"/><circle cx="6" cy="6" r="0.8" fill="#77777b"/></svg>
<span class="lbl" style="top:233.8px">Undertones Stops Y</span>
<div class="trk" style="top:232.3px"></div>
<div class="knob" style="left:1765.2px;top:229.8px"></div>
<div class="val" style="top:226.3px">0.000</div>
<div class="dia" style="top:231.1px"></div>
<svg style="left:1893.5px;top:227.3px" width="12" height="12" viewBox="0 0 12 12"><path d="M2.6 3.2A4.3 4.3 0 1 1 1.7 6" fill="none" stroke="#77777b" stroke-width="1"/><path d="M1.2 1.4V4.4H4.2" fill="none" stroke="#77777b" stroke-width="1"/><circle cx="6" cy="6" r="0.8" fill="#77777b"/></svg>
<span class="lbl" style="top:252.6px">Undertones Stops R</span>
<div class="trk" style="top:251.1px"></div>
<div class="knob" style="left:1765.2px;top:248.6px"></div>
<div class="val" style="top:245.1px">0.000</div>
<div class="dia" style="top:249.9px"></div>
<svg style="left:1893.5px;top:246.1px" width="12" height="12" viewBox="0 0 12 12"><path d="M2.6 3.2A4.3 4.3 0 1 1 1.7 6" fill="none" stroke="#77777b" stroke-width="1"/><path d="M1.2 1.4V4.4H4.2" fill="none" stroke="#77777b" stroke-width="1"/><circle cx="6" cy="6" r="0.8" fill="#77777b"/></svg>
<span class="lbl" style="top:271.3px">Undertones Stops G</span>
<div class="trk" style="top:269.8px"></div>
<div class="knob" style="left:1765.2px;top:267.3px"></div>
<div class="val" style="top:263.8px">0.000</div>
<div class="dia" style="top:268.6px"></div>
<svg style="left:1893.5px;top:264.8px" width="12" height="12" viewBox="0 0 12 12"><path d="M2.6 3.2A4.3 4.3 0 1 1 1.7 6" fill="none" stroke="#77777b" stroke-width="1"/><path d="M1.2 1.4V4.4H4.2" fill="none" stroke="#77777b" stroke-width="1"/><circle cx="6" cy="6" r="0.8" fill="#77777b"/></svg>
<span class="lbl" style="top:290.1px">Undertones Stops B</span>
<div class="trk" style="top:288.6px"></div>
<div class="knob" style="left:1765.2px;top:286.1px"></div>
<div class="val" style="top:282.6px">0.000</div>
<div class="dia" style="top:287.4px"></div>
<svg style="left:1893.5px;top:283.6px" width="12" height="12" viewBox="0 0 12 12"><path d="M2.6 3.2A4.3 4.3 0 1 1 1.7 6" fill="none" stroke="#77777b" stroke-width="1"/><path d="M1.2 1.4V4.4H4.2" fill="none" stroke="#77777b" stroke-width="1"/><circle cx="6" cy="6" r="0.8" fill="#77777b"/></svg>
<span class="lbl" style="top:308.9px">Mid Contrast Y</span>
<div class="trk" style="top:307.4px"></div>
<div class="knob" style="left:1765.2px;top:304.9px"></div>
<div class="val" style="top:301.4px">0.000</div>
<div class="dia" style="top:306.2px"></div>
<svg style="left:1893.5px;top:302.4px" width="12" height="12" viewBox="0 0 12 12"><path d="M2.6 3.2A4.3 4.3 0 1 1 1.7 6" fill="none" stroke="#77777b" stroke-width="1"/><path d="M1.2 1.4V4.4H4.2" fill="none" stroke="#77777b" stroke-width="1"/><circle cx="6" cy="6" r="0.8" fill="#77777b"/></svg>
<span class="lbl" style="top:327.6px">Mid Contrast R</span>
<div class="trk" style="top:326.1px"></div>
<div class="knob" style="left:1765.2px;top:323.6px"></div>
<div class="val" style="top:320.1px">0.000</div>
<div class="dia" style="top:324.9px"></div>
<svg style="left:1893.5px;top:321.1px" width="12" height="12" viewBox="0 0 12 12"><path d="M2.6 3.2A4.3 4.3 0 1 1 1.7 6" fill="none" stroke="#77777b" stroke-width="1"/><path d="M1.2 1.4V4.4H4.2" fill="none" stroke="#77777b" stroke-width="1"/><circle cx="6" cy="6" r="0.8" fill="#77777b"/></svg>
<span class="lbl" style="top:346.4px">Mid Contrast G</span>
<div class="trk" style="top:344.9px"></div>
<div class="knob" style="left:1765.2px;top:342.4px"></div>
<div class="val" style="top:338.9px">0.000</div>
<div class="dia" style="top:343.7px"></div>
<svg style="left:1893.5px;top:339.9px" width="12" height="12" viewBox="0 0 12 12"><path d="M2.6 3.2A4.3 4.3 0 1 1 1.7 6" fill="none" stroke="#77777b" stroke-width="1"/><path d="M1.2 1.4V4.4H4.2" fill="none" stroke="#77777b" stroke-width="1"/><circle cx="6" cy="6" r="0.8" fill="#77777b"/></svg>
<span class="lbl" style="top:365.1px">Mid Contrast B</span>
<div class="trk" style="top:363.6px"></div>
<div class="knob" style="left:1765.2px;top:361.1px"></div>
<div class="val" style="top:357.6px">0.000</div>
<div class="dia" style="top:362.4px"></div>
<svg style="left:1893.5px;top:358.6px" width="12" height="12" viewBox="0 0 12 12"><path d="M2.6 3.2A4.3 4.3 0 1 1 1.7 6" fill="none" stroke="#77777b" stroke-width="1"/><path d="M1.2 1.4V4.4H4.2" fill="none" stroke="#77777b" stroke-width="1"/><circle cx="6" cy="6" r="0.8" fill="#77777b"/></svg>
<span class="lbl" style="top:383.9px">Highlights Stops Y</span>
<div class="trk" style="top:382.4px"></div>
<div class="knob" style="left:1757.2px;top:379.9px"></div>
<div class="val" style="top:376.4px">0.000</div>
<div class="dia" style="top:381.2px"></div>
<svg style="left:1893.5px;top:377.4px" width="12" height="12" viewBox="0 0 12 12"><path d="M2.6 3.2A4.3 4.3 0 1 1 1.7 6" fill="none" stroke="#77777b" stroke-width="1"/><path d="M1.2 1.4V4.4H4.2" fill="none" stroke="#77777b" stroke-width="1"/><circle cx="6" cy="6" r="0.8" fill="#77777b"/></svg>
<span class="lbl" style="top:402.7px">Highlights Stops R</span>
<div class="trk" style="top:401.2px"></div>
<div class="knob" style="left:1757.2px;top:398.7px"></div>
<div class="val" style="top:395.2px">0.000</div>
<div class="dia" style="top:400.0px"></div>
<svg style="left:1893.5px;top:396.2px" width="12" height="12" viewBox="0 0 12 12"><path d="M2.6 3.2A4.3 4.3 0 1 1 1.7 6" fill="none" stroke="#77777b" stroke-width="1"/><path d="M1.2 1.4V4.4H4.2" fill="none" stroke="#77777b" stroke-width="1"/><circle cx="6" cy="6" r="0.8" fill="#77777b"/></svg>
<span class="lbl" style="top:421.4px">Highlights Stops G</span>
<div class="trk" style="top:419.9px"></div>
<div class="knob" style="left:1757.2px;top:417.4px"></div>
<div class="val" style="top:413.9px">0.000</div>
<div class="dia" style="top:418.7px"></div>
<svg style="left:1893.5px;top:414.9px" width="12" height="12" viewBox="0 0 12 12"><path d="M2.6 3.2A4.3 4.3 0 1 1 1.7 6" fill="none" stroke="#77777b" stroke-width="1"/><path d="M1.2 1.4V4.4H4.2" fill="none" stroke="#77777b" stroke-width="1"/><circle cx="6" cy="6" r="0.8" fill="#77777b"/></svg>
<span class="lbl" style="top:440.2px">Highlights Stops B</span>
<div class="trk" style="top:438.7px"></div>
<div class="knob" style="left:1757.2px;top:436.2px"></div>
<div class="val" style="top:432.7px">0.000</div>
<div class="dia" style="top:437.5px"></div>
<svg style="left:1893.5px;top:433.7px" width="12" height="12" viewBox="0 0 12 12"><path d="M2.6 3.2A4.3 4.3 0 1 1 1.7 6" fill="none" stroke="#77777b" stroke-width="1"/><path d="M1.2 1.4V4.4H4.2" fill="none" stroke="#77777b" stroke-width="1"/><circle cx="6" cy="6" r="0.8" fill="#77777b"/></svg>
<span class="lbl" style="top:458.9px">Whites Stops Y</span>
<div class="trk" style="top:457.4px"></div>
<div class="knob" style="left:1765.2px;top:454.9px"></div>
<div class="val" style="top:451.4px">0.00</div>
<div class="dia" style="top:456.2px"></div>
<svg style="left:1893.5px;top:452.4px" width="12" height="12" viewBox="0 0 12 12"><path d="M2.6 3.2A4.3 4.3 0 1 1 1.7 6" fill="none" stroke="#77777b" stroke-width="1"/><path d="M1.2 1.4V4.4H4.2" fill="none" stroke="#77777b" stroke-width="1"/><circle cx="6" cy="6" r="0.8" fill="#77777b"/></svg>
<span class="lbl" style="top:477.7px">Whites Stops R</span>
<div class="trk" style="top:476.2px"></div>
<div class="knob" style="left:1765.2px;top:473.7px"></div>
<div class="val" style="top:470.2px">0.00</div>
<div class="dia" style="top:475.0px"></div>
<svg style="left:1893.5px;top:471.2px" width="12" height="12" viewBox="0 0 12 12"><path d="M2.6 3.2A4.3 4.3 0 1 1 1.7 6" fill="none" stroke="#77777b" stroke-width="1"/><path d="M1.2 1.4V4.4H4.2" fill="none" stroke="#77777b" stroke-width="1"/><circle cx="6" cy="6" r="0.8" fill="#77777b"/></svg>
<span class="lbl" style="top:496.5px">Whites Stops G</span>
<div class="trk" style="top:495.0px"></div>
<div class="knob" style="left:1765.2px;top:492.5px"></div>
<div class="val" style="top:489.0px">0.00</div>
<div class="dia" style="top:493.8px"></div>
<svg style="left:1893.5px;top:490.0px" width="12" height="12" viewBox="0 0 12 12"><path d="M2.6 3.2A4.3 4.3 0 1 1 1.7 6" fill="none" stroke="#77777b" stroke-width="1"/><path d="M1.2 1.4V4.4H4.2" fill="none" stroke="#77777b" stroke-width="1"/><circle cx="6" cy="6" r="0.8" fill="#77777b"/></svg>
<span class="lbl" style="top:515.2px">Whites Stops B</span>
<div class="trk" style="top:513.7px"></div>
<div class="knob" style="left:1765.2px;top:511.2px"></div>
<div class="val" style="top:507.7px">0.00</div>
<div class="dia" style="top:512.5px"></div>
<svg style="left:1893.5px;top:508.70000000000005px" width="12" height="12" viewBox="0 0 12 12"><path d="M2.6 3.2A4.3 4.3 0 1 1 1.7 6" fill="none" stroke="#77777b" stroke-width="1"/><path d="M1.2 1.4V4.4H4.2" fill="none" stroke="#77777b" stroke-width="1"/><circle cx="6" cy="6" r="0.8" fill="#77777b"/></svg>
<span class="lbl" style="top:534.0px">Undertones Loc.</span>
<div class="trk" style="top:532.5px"></div>
<div class="knob" style="left:1778.7px;top:530.0px"></div>
<div class="val" style="top:526.5px">-3.500</div>
<div class="dia" style="top:531.3px"></div>
<svg style="left:1893.5px;top:527.5px" width="12" height="12" viewBox="0 0 12 12"><path d="M2.6 3.2A4.3 4.3 0 1 1 1.7 6" fill="none" stroke="#77777b" stroke-width="1"/><path d="M1.2 1.4V4.4H4.2" fill="none" stroke="#77777b" stroke-width="1"/><circle cx="6" cy="6" r="0.8" fill="#77777b"/></svg>
<span class="lbl" style="top:552.7px">Highlights Loc.</span>
<div class="trk" style="top:551.2px"></div>
<div class="knob" style="left:1751.1px;top:548.7px"></div>
<div class="val" style="top:545.2px">3.500</div>
<div class="dia" style="top:550.0px"></div>
<svg style="left:1893.5px;top:546.2px" width="12" height="12" viewBox="0 0 12 12"><path d="M2.6 3.2A4.3 4.3 0 1 1 1.7 6" fill="none" stroke="#77777b" stroke-width="1"/><path d="M1.2 1.4V4.4H4.2" fill="none" stroke="#77777b" stroke-width="1"/><circle cx="6" cy="6" r="0.8" fill="#77777b"/></svg>
<span class="lbl" style="top:571.5px">White Point Nits</span>
<div class="trk" style="top:570.0px"></div>
<div class="knob" style="left:1805.8px;top:567.5px"></div>
<div class="val" style="top:564.0px">10000</div>
<div class="dia" style="top:568.8px"></div>
<svg style="left:1893.5px;top:565.0px" width="12" height="12" viewBox="0 0 12 12"><path d="M2.6 3.2A4.3 4.3 0 1 1 1.7 6" fill="none" stroke="#77777b" stroke-width="1"/><path d="M1.2 1.4V4.4H4.2" fill="none" stroke="#77777b" stroke-width="1"/><circle cx="6" cy="6" r="0.8" fill="#77777b"/></svg>
<span class="lbl" style="top:590.3px">Lum Mix</span>
<div class="trk" style="top:588.8px"></div>
<div class="knob" style="left:1723.9px;top:586.3px"></div>
<div class="val" style="top:582.8px">0.000</div>
<div class="dia" style="top:587.6px"></div>
<svg style="left:1893.5px;top:583.8px" width="12" height="12" viewBox="0 0 12 12"><path d="M2.6 3.2A4.3 4.3 0 1 1 1.7 6" fill="none" stroke="#77777b" stroke-width="1"/><path d="M1.2 1.4V4.4H4.2" fill="none" stroke="#77777b" stroke-width="1"/><circle cx="6" cy="6" r="0.8" fill="#77777b"/></svg>
<span class="lbl" style="top:609.0px">Curves Blend</span>
<div class="trk" style="top:607.5px"></div>
<div class="knob" style="left:1805.8px;top:605.0px"></div>
<div class="val" style="top:601.5px">1.000</div>
<div class="dia" style="top:606.3px"></div>
<svg style="left:1893.5px;top:602.5px" width="12" height="12" viewBox="0 0 12 12"><path d="M2.6 3.2A4.3 4.3 0 1 1 1.7 6" fill="none" stroke="#77777b" stroke-width="1"/><path d="M1.2 1.4V4.4H4.2" fill="none" stroke="#77777b" stroke-width="1"/><circle cx="6" cy="6" r="0.8" fill="#77777b"/></svg>
<span class="lbl" style="top:627.8px"><span style='letter-spacing:-0.7px'>====</span> <span style='font-size:8.3px;letter-spacing:-0.6px'>BALANCE</span> <span style='letter-spacing:-0.7px'>====</span></span>
<div class="trk" style="top:626.3px"></div>
<div class="knob" style="left:1723.9px;top:623.8px"></div>
<div class="val" style="top:620.3px">0.000</div>
<div class="dia" style="top:625.1px"></div>
<svg style="left:1893.5px;top:621.3px" width="12" height="12" viewBox="0 0 12 12"><path d="M2.6 3.2A4.3 4.3 0 1 1 1.7 6" fill="none" stroke="#77777b" stroke-width="1"/><path d="M1.2 1.4V4.4H4.2" fill="none" stroke="#77777b" stroke-width="1"/><circle cx="6" cy="6" r="0.8" fill="#77777b"/></svg>
<span class="lbl" style="top:646.5px">Exposure</span>
<div class="trk" style="top:645.0px"></div>
<div class="knob" style="left:1765.2px;top:642.5px"></div>
<div class="val" style="top:639.0px">0.00</div>
<div class="dia" style="top:643.8px"></div>
<svg style="left:1893.5px;top:640.0px" width="12" height="12" viewBox="0 0 12 12"><path d="M2.6 3.2A4.3 4.3 0 1 1 1.7 6" fill="none" stroke="#77777b" stroke-width="1"/><path d="M1.2 1.4V4.4H4.2" fill="none" stroke="#77777b" stroke-width="1"/><circle cx="6" cy="6" r="0.8" fill="#77777b"/></svg>
<span class="lbl" style="top:665.3px">Temp</span>
<div class="trk" style="top:663.8px"></div>
<div class="knob" style="left:1775.0px;top:661.3px"></div>
<div class="val" style="top:657.8px">0</div>
<div class="dia" style="top:662.6px"></div>
<svg style="left:1893.5px;top:658.8px" width="12" height="12" viewBox="0 0 12 12"><path d="M2.6 3.2A4.3 4.3 0 1 1 1.7 6" fill="none" stroke="#77777b" stroke-width="1"/><path d="M1.2 1.4V4.4H4.2" fill="none" stroke="#77777b" stroke-width="1"/><circle cx="6" cy="6" r="0.8" fill="#77777b"/></svg>
<span class="lbl" style="top:684.1px">Tint</span>
<div class="trk" style="top:682.6px"></div>
<div class="knob" style="left:1765.2px;top:680.1px"></div>
<div class="val" style="top:676.6px">0.0</div>
<div class="dia" style="top:681.4px"></div>
<svg style="left:1893.5px;top:677.6px" width="12" height="12" viewBox="0 0 12 12"><path d="M2.6 3.2A4.3 4.3 0 1 1 1.7 6" fill="none" stroke="#77777b" stroke-width="1"/><path d="M1.2 1.4V4.4H4.2" fill="none" stroke="#77777b" stroke-width="1"/><circle cx="6" cy="6" r="0.8" fill="#77777b"/></svg>
<span class="lbl" style="top:702.8px">Saturation</span>
<div class="trk" style="top:701.3px"></div>
<div class="knob" style="left:1765.2px;top:698.8px"></div>
<div class="val" style="top:695.3px">1.000</div>
<div class="dia" style="top:700.1px"></div>
<svg style="left:1893.5px;top:696.3px" width="12" height="12" viewBox="0 0 12 12"><path d="M2.6 3.2A4.3 4.3 0 1 1 1.7 6" fill="none" stroke="#77777b" stroke-width="1"/><path d="M1.2 1.4V4.4H4.2" fill="none" stroke="#77777b" stroke-width="1"/><circle cx="6" cy="6" r="0.8" fill="#77777b"/></svg>
<span class="lbl" style="top:721.6px">Hue Rotation</span>
<div class="trk" style="top:720.1px"></div>
<div class="knob" style="left:1765.2px;top:717.6px"></div>
<div class="val" style="top:714.1px">0.00</div>
<div class="dia" style="top:718.9px"></div>
<svg style="left:1893.5px;top:715.1px" width="12" height="12" viewBox="0 0 12 12"><path d="M2.6 3.2A4.3 4.3 0 1 1 1.7 6" fill="none" stroke="#77777b" stroke-width="1"/><path d="M1.2 1.4V4.4H4.2" fill="none" stroke="#77777b" stroke-width="1"/><circle cx="6" cy="6" r="0.8" fill="#77777b"/></svg>
<span class="lbl" style="top:740.3px">Balance Blend</span>
<div class="trk" style="top:738.8px"></div>
<div class="knob" style="left:1805.8px;top:736.3px"></div>
<div class="val" style="top:732.8px">1.000</div>
<div class="dia" style="top:737.6px"></div>
<svg style="left:1893.5px;top:733.8px" width="12" height="12" viewBox="0 0 12 12"><path d="M2.6 3.2A4.3 4.3 0 1 1 1.7 6" fill="none" stroke="#77777b" stroke-width="1"/><path d="M1.2 1.4V4.4H4.2" fill="none" stroke="#77777b" stroke-width="1"/><circle cx="6" cy="6" r="0.8" fill="#77777b"/></svg>
<span class="lbl" style="top:759.1px"><span style='letter-spacing:-0.7px'>==</span> <span style='font-size:8.3px;letter-spacing:-0.6px'>BLEACH BYPASS</span> <span style='letter-spacing:-0.7px'>==</span></span>
<div class="trk" style="top:757.6px"></div>
<div class="knob" style="left:1723.9px;top:755.1px"></div>
<div class="val" style="top:751.6px">0.000</div>
<div class="dia" style="top:756.4px"></div>
<svg style="left:1893.5px;top:752.6px" width="12" height="12" viewBox="0 0 12 12"><path d="M2.6 3.2A4.3 4.3 0 1 1 1.7 6" fill="none" stroke="#77777b" stroke-width="1"/><path d="M1.2 1.4V4.4H4.2" fill="none" stroke="#77777b" stroke-width="1"/><circle cx="6" cy="6" r="0.8" fill="#77777b"/></svg>
<span class="lbl" style="top:777.9px">Silver Contrast</span>
<div class="trk" style="top:776.4px"></div>
<div class="knob" style="left:1732.5px;top:773.9px"></div>
<div class="val" style="top:770.4px">1.100</div>
<div class="dia" style="top:775.2px"></div>
<svg style="left:1893.5px;top:771.4px" width="12" height="12" viewBox="0 0 12 12"><path d="M2.6 3.2A4.3 4.3 0 1 1 1.7 6" fill="none" stroke="#77777b" stroke-width="1"/><path d="M1.2 1.4V4.4H4.2" fill="none" stroke="#77777b" stroke-width="1"/><circle cx="6" cy="6" r="0.8" fill="#77777b"/></svg>
<span class="lbl" style="top:796.6px">Bleach Bypass Blend</span>
<div class="trk" style="top:795.1px"></div>
<div class="knob" style="left:1723.9px;top:792.6px"></div>
<div class="val" style="top:789.1px">0.000</div>
<div class="dia" style="top:793.9px"></div>
<svg style="left:1893.5px;top:790.1px" width="12" height="12" viewBox="0 0 12 12"><path d="M2.6 3.2A4.3 4.3 0 1 1 1.7 6" fill="none" stroke="#77777b" stroke-width="1"/><path d="M1.2 1.4V4.4H4.2" fill="none" stroke="#77777b" stroke-width="1"/><circle cx="6" cy="6" r="0.8" fill="#77777b"/></svg>
<div class="cb" style="top:808.9px"></div>
<span class="cbl" style="top:815.2px">Gang Curves</span>
<svg style="left:1893.5px;top:808.9px" width="12" height="12" viewBox="0 0 12 12"><path d="M2.6 3.2A4.3 4.3 0 1 1 1.7 6" fill="none" stroke="#77777b" stroke-width="1"/><path d="M1.2 1.4V4.4H4.2" fill="none" stroke="#77777b" stroke-width="1"/><circle cx="6" cy="6" r="0.8" fill="#77777b"/></svg>
<div class="cb" style="top:827.6px"></div>
<span class="cbl" style="top:833.9px">Draw Charts</span>
<svg style="left:1893.5px;top:827.6px" width="12" height="12" viewBox="0 0 12 12"><path d="M2.6 3.2A4.3 4.3 0 1 1 1.7 6" fill="none" stroke="#77777b" stroke-width="1"/><path d="M1.2 1.4V4.4H4.2" fill="none" stroke="#77777b" stroke-width="1"/><circle cx="6" cy="6" r="0.8" fill="#77777b"/></svg>
<div class="cb" style="top:846.4px"></div>
<span class="cbl" style="top:852.7px">Curves Bypass</span>
<svg style="left:1893.5px;top:846.4px" width="12" height="12" viewBox="0 0 12 12"><path d="M2.6 3.2A4.3 4.3 0 1 1 1.7 6" fill="none" stroke="#77777b" stroke-width="1"/><path d="M1.2 1.4V4.4H4.2" fill="none" stroke="#77777b" stroke-width="1"/><circle cx="6" cy="6" r="0.8" fill="#77777b"/></svg>
<div class="cb" style="top:865.2px"></div>
<span class="cbl" style="top:871.5px">Balance Bypass</span>
<svg style="left:1893.5px;top:865.2px" width="12" height="12" viewBox="0 0 12 12"><path d="M2.6 3.2A4.3 4.3 0 1 1 1.7 6" fill="none" stroke="#77777b" stroke-width="1"/><path d="M1.2 1.4V4.4H4.2" fill="none" stroke="#77777b" stroke-width="1"/><circle cx="6" cy="6" r="0.8" fill="#77777b"/></svg>
<div class="cb" style="top:883.9px"></div>
<span class="cbl" style="top:890.2px">Bleach Bypass</span>
<svg style="left:1893.5px;top:883.9px" width="12" height="12" viewBox="0 0 12 12"><path d="M2.6 3.2A4.3 4.3 0 1 1 1.7 6" fill="none" stroke="#77777b" stroke-width="1"/><path d="M1.2 1.4V4.4H4.2" fill="none" stroke="#77777b" stroke-width="1"/><circle cx="6" cy="6" r="0.8" fill="#77777b"/></svg>
<svg style="left:1727.6px;top:807px" width="10.500" height="15" viewBox="0 0 10 15"><path d="M0.7 0.7V11.5L3.3 9.2L5.2 13.6L7 12.8L5.1 8.5H8.6Z" fill="#111" stroke="#fff" stroke-width="0.9" stroke-linejoin="round"/></svg>
<span class="lbl" style="top:909.2px">Preset</span>
<div class="dd" style="top:901.7px;letter-spacing:0.0px">Kodak 2383</div>
<svg style="left:1841.0px;top:907.38px" width="6" height="3.2" viewBox="0 0 6 3.2"><path d="M0 0L3.0 3.2L6 0" fill="none" stroke="#8a8a8e" stroke-width="1.1"/></svg>
<div class="dia" style="top:906.5px"></div>
<svg style="left:1893.5px;top:902.7px" width="12" height="12" viewBox="0 0 12 12"><path d="M2.6 3.2A4.3 4.3 0 1 1 1.7 6" fill="none" stroke="#77777b" stroke-width="1"/><path d="M1.2 1.4V4.4H4.2" fill="none" stroke="#77777b" stroke-width="1"/><circle cx="6" cy="6" r="0.8" fill="#77777b"/></svg>
<span class="lbl" style="top:927.9px">Color Space Primaries</span>
<div class="dd" style="top:920.4px;letter-spacing:0.06px">DaVinci Wide Gamut</div>
<svg style="left:1841.0px;top:926.14px" width="6" height="3.2" viewBox="0 0 6 3.2"><path d="M0 0L3.0 3.2L6 0" fill="none" stroke="#8a8a8e" stroke-width="1.1"/></svg>
<div class="dia" style="top:925.2px"></div>
<svg style="left:1893.5px;top:921.4px" width="12" height="12" viewBox="0 0 12 12"><path d="M2.6 3.2A4.3 4.3 0 1 1 1.7 6" fill="none" stroke="#77777b" stroke-width="1"/><path d="M1.2 1.4V4.4H4.2" fill="none" stroke="#77777b" stroke-width="1"/><circle cx="6" cy="6" r="0.8" fill="#77777b"/></svg>
<span class="lbl" style="top:946.7px">Transfer Function</span>
<div class="dd" style="top:939.2px;letter-spacing:0.13px">DaVinci Intermediate</div>
<svg style="left:1841.0px;top:944.9px" width="6" height="3.2" viewBox="0 0 6 3.2"><path d="M0 0L3.0 3.2L6 0" fill="none" stroke="#8a8a8e" stroke-width="1.1"/></svg>
<div class="dia" style="top:944.0px"></div>
<svg style="left:1893.5px;top:940.2px" width="12" height="12" viewBox="0 0 12 12"><path d="M2.6 3.2A4.3 4.3 0 1 1 1.7 6" fill="none" stroke="#77777b" stroke-width="1"/><path d="M1.2 1.4V4.4H4.2" fill="none" stroke="#77777b" stroke-width="1"/><circle cx="6" cy="6" r="0.8" fill="#77777b"/></svg>
<svg style="left:1636px;top:966px" width="4" height="7" viewBox="0 0 4 7"><path d="M0.4 0.4L3.4 3.5L0.4 6.6" fill="none" stroke="#8a8a8e" stroke-width="1"/></svg>
<span class="t" style="left:1644.5px;top:969.6px;font-size:9.3px;color:#bdbdc1">Global Blend</span>
<div class="abs" style="left:1914px;top:68px;width:6px;height:976px;background:#232327"></div>
<div class="abs" style="left:181.5px;top:851.5px;width:707px;height:123px;border-radius:13px;background:rgba(2,2,2,0.93)"></div>
<span style="font-weight:bold;font-style:italic;color:#f2d61c;-webkit-text-stroke:0.5px #f2d61c;font-size:45.6px;line-height:1;white-space:pre;position:absolute;transform:translateX(-50%);left:534.5px;top:864.3px;letter-spacing:0.55px;left:535.2px" id="sub1">that's where Bleach Bypass</span>
<span style="font-weight:bold;font-style:italic;color:#f2d61c;-webkit-text-stroke:0.5px #f2d61c;font-size:45.6px;line-height:1;white-space:pre;position:absolute;transform:translateX(-50%);left:534.5px;top:924.3px;letter-spacing:0.1px;left:534.2px" id="sub2">comes to rescue.</span>
<div class="abs" style="left:18px;top:1008.5px;width:1584px;height:1px;background:#3a3a3e"></div>
<div class="abs" style="left:15.5px;top:1005px;width:3px;height:9px;background:#f2f2f2;border-radius:0.5px"></div>
<svg style="left:16.5px;top:1022.5px" width="15" height="15" viewBox="0 0 15 15"><circle cx="7.5" cy="7.5" r="6.7" fill="none" stroke="#e8e8ea" stroke-width="1.1"/><text x="7.4" y="10.6" text-anchor="middle" font-family="Liberation Serif,serif" font-style="italic" font-weight="bold" font-size="9.5" fill="#e8e8ea">fx</text></svg>
<svg style="left:35.5px;top:1029.4px" width="6" height="3.2" viewBox="0 0 6 3.2"><path d="M0 0L3.0 3.2L6 0" fill="none" stroke="#5e5e62" stroke-width="1.1"/></svg>
<svg style="left:50.5px;top:1024.5px" width="13" height="10" viewBox="0 0 13 10"><path d="M6.5 0.7L12.3 3.5L6.5 6.3L0.7 3.5Z" fill="none" stroke="#4e4e52" stroke-width="0.9"/><path d="M0.7 6L6.5 8.8L12.3 6" fill="none" stroke="#3e3e42" stroke-width="0.9"/></svg>
<svg style="left:75.5px;top:1024.5px" width="14" height="11" viewBox="0 0 14 11"><path d="M0.5 3.5H3L7 0.3V10.700L3 7.500H0.500Z" fill="#e8e8ea"/><path d="M8.8 3.200A3 3 0 0 1 8.800 7.800M10.500 1.500A5.500 5.500 0 0 1 10.500 9.500" fill="none" stroke="#e8e8ea" stroke-width="1.100"/></svg>
<svg style="left:725.5px;top:1026px" width="15" height="10" viewBox="0 0 15 10"><rect x="0" y="0" width="1.8" height="10" fill="#8a8a8e"/><path d="M8.500 0V10L2 5ZM15 0V10L8.500 5Z" fill="#8a8a8e"/></svg>
<svg style="left:754px;top:1026px" width="8" height="10" viewBox="0 0 8 10"><path d="M8 0V10L0 5Z" fill="#8a8a8e"/></svg>
<div class="abs" style="left:777px;top:1026.5px;width:9.500px;height:9.500px;background:#8a8a8e"></div>
<svg style="left:801px;top:1026px" width="8" height="10" viewBox="0 0 8 10"><path d="M0 0V10L8 5Z" fill="#8a8a8e"/></svg>
<svg style="left:822.5px;top:1026px" width="15" height="10" viewBox="0 0 15 10"><rect x="13.2" y="0" width="1.8" height="10" fill="#8a8a8e"/><path d="M0 0V10L6.500 5ZM6.500 0V10L13 5Z" fill="#8a8a8e"/></svg>
<svg style="left:851px;top:1024.5px" width="16" height="13" viewBox="0 0 16 13"><path d="M10.500 3.500H4.500A3.500 3.500 0 0 0 4.500 10.500H11.500A3.500 3.500 0 0 0 13.800 4.500" fill="none" stroke="#e0373f" stroke-width="1.500"/><path d="M8.800 0.500L12 3.500L8.800 6.500" fill="none" stroke="#e0373f" stroke-width="1.500"/></svg>
<span class="t b w" style="left:1536.5px;top:1030.8px;font-size:11.750px">01:02:32:21</span>
<div class="abs" style="left:1112.5px;top:721px;width:363.5px;height:295.5px;border-radius:7px;background:#000;overflow:hidden;box-shadow:0 0 0 1px #0c0c0e,0 6px 18px rgba(0,0,0,.55)">
<div class="abs" style="left:0;top:0;width:100%;height:22px;background:#28282c;border-bottom:1px solid #18181a"></div>
<div class="abs" style="left:0;top:22px;width:100%;height:22px;background:#242428;border-bottom:1px solid #141416"></div>
</div>
<div class="abs" style="left:1120.5px;top:727.5px;width:9px;height:9px;border-radius:50%;background:#3b3b3f"></div>
<div class="abs" style="left:1134.0px;top:727.5px;width:9px;height:9px;border-radius:50%;background:#3b3b3f"></div>
<div class="abs" style="left:1147.5px;top:727.5px;width:9px;height:9px;border-radius:50%;background:#3b3b3f"></div>
<span class="t b" style="left:1297px;top:732.5px;transform:translate(-50%,-50%);font-size:9.3px;color:#e8e8ea">Scopes</span>
<div class="sep" style="left:1355px;top:723px;height:18px"></div>
<svg style="left:1365.5px;top:727.5px" width="13" height="9" viewBox="0 0 13 9"><rect x="0.8" y="0.8" width="11.4" height="7.4" fill="none" stroke="#fff" stroke-width="1.5"/></svg>
<svg style="left:1386.5px;top:727.5px" width="13" height="9" viewBox="0 0 13 9"><rect x="0.5" y="0.5" width="5" height="8" fill="none" stroke="#6a6a6e"/><rect x="7.5" y="0.5" width="5" height="8" fill="none" stroke="#6a6a6e"/></svg>
<svg style="left:1407.5px;top:727.5px" width="13" height="9" viewBox="0 0 13 9"><rect x="0.5" y="0.5" width="5" height="3" fill="none" stroke="#6a6a6e"/><rect x="7.5" y="0.5" width="5" height="3" fill="none" stroke="#6a6a6e"/><rect x="0.5" y="5.5" width="5" height="3" fill="none" stroke="#6a6a6e"/><rect x="7.5" y="5.5" width="5" height="3" fill="none" stroke="#6a6a6e"/></svg>
<svg style="left:1428.5px;top:727.5px" width="13" height="9" viewBox="0 0 13 9"><rect x="0" y="0" width="2.6" height="9" fill="#3a3a3e"/><rect x="3.4" y="0" width="2.6" height="9" fill="#3a3a3e"/><rect x="6.8" y="0" width="2.6" height="9" fill="#3a3a3e"/><rect x="10.2" y="0" width="2.6" height="9" fill="#3a3a3e"/></svg>
<div class="sep" style="left:1450px;top:723px;height:40px"></div>
<svg style="left:1456px;top:730px" width="14" height="4" viewBox="0 0 14 4"><circle cx="2" cy="2" r="1.3" fill="#9a9a9e"/><circle cx="7" cy="2" r="1.3" fill="#9a9a9e"/><circle cx="12" cy="2" r="1.3" fill="#9a9a9e"/></svg>
<span class="t b w" style="left:1372.5px;top:754.5px;font-size:9.7px">Vectorscope</span>
<svg style="left:1437.0px;top:753.4px" width="6" height="3.2" viewBox="0 0 6 3.2"><path d="M0 0L3.0 3.2L6 0" fill="none" stroke="#8a8a8e" stroke-width="1.1"/></svg>
<svg style="left:1457px;top:748.5px" width="12" height="12" viewBox="0 0 12 12"><path d="M0 2.5H12M0 6H12M0 9.5H12" stroke="#5e5e62" stroke-width="0.9"/><circle cx="8" cy="2.5" r="1.4" fill="#242428" stroke="#5e5e62" stroke-width="0.9"/><circle cx="4" cy="6" r="1.4" fill="#242428" stroke="#5e5e62" stroke-width="0.9"/><circle cx="7" cy="9.5" r="1.4" fill="#242428" stroke="#5e5e62" stroke-width="0.9"/></svg>
<svg style="left:0;top:0" width="1920" height="1080" viewBox="0 0 1920 1080"><defs><linearGradient id="trc" x1="0" y1="806" x2="0" y2="978" gradientUnits="userSpaceOnUse"><stop offset="0" stop-color="#e02028"/><stop offset="0.2" stop-color="#c02830"/><stop offset="0.3" stop-color="#c88080"/><stop offset="0.4" stop-color="#e8d8c8"/><stop offset="0.48" stop-color="#ffffff"/><stop offset="0.56" stop-color="#d0e0d0"/><stop offset="0.66" stop-color="#2a6a5c"/><stop offset="0.85" stop-color="#2a8870"/><stop offset="1" stop-color="#38c8a8"/></linearGradient></defs><g stroke="#5e5a32" stroke-width="0.75" fill="none" transform="translate(0 20.00) scale(1 0.978)"><circle cx="1294.7" cy="890.8" r="119.3"/><path d="M1175.4 890.8H1414.0M1294.7 771.5V1010.0999999999999"/><path d="M1414.0 890.8L1404.0 890.8M1413.5 901.2L1408.1 900.7M1412.2 911.5L1402.3 909.8M1409.9 921.7L1404.6 920.3M1406.8 931.6L1397.4 928.2M1402.8 941.2L1397.8 938.9M1398.0 950.4L1389.4 945.4M1392.4 959.2L1387.9 956.1M1386.1 967.5L1378.4 961.1M1379.1 975.2L1375.2 971.3M1371.4 982.2L1365.0 974.5M1363.1 988.5L1360.0 984.0M1354.4 994.1L1349.4 985.5M1345.1 998.9L1342.8 993.9M1335.5 1002.9L1332.1 993.5M1325.6 1006.0L1324.2 1000.7M1315.4 1008.3L1313.7 998.4M1305.1 1009.6L1304.6 1004.2M1294.7 1010.1L1294.7 1000.1M1284.3 1009.6L1284.8 1004.2M1274.0 1008.3L1275.7 998.4M1263.8 1006.0L1265.2 1000.7M1253.9 1002.9L1257.3 993.5M1244.3 998.9L1246.6 993.9M1235.1 994.1L1240.1 985.5M1226.3 988.5L1229.4 984.0M1218.0 982.2L1224.4 974.5M1210.3 975.2L1214.2 971.3M1203.3 967.5L1211.0 961.1M1197.0 959.2L1201.5 956.1M1191.4 950.4L1200.0 945.4M1186.6 941.2L1191.6 938.9M1182.6 931.6L1192.0 928.2M1179.5 921.7L1184.8 920.3M1177.2 911.5L1187.1 909.8M1175.9 901.2L1181.3 900.7M1175.4 890.8L1185.4 890.8M1175.9 880.4L1181.3 880.9M1177.2 870.1L1187.1 871.8M1179.5 859.9L1184.8 861.3M1182.6 850.0L1192.0 853.4M1186.6 840.4L1191.6 842.7M1191.4 831.1L1200.0 836.1M1197.0 822.4L1201.5 825.5M1203.3 814.1L1211.0 820.5M1210.3 806.4L1214.2 810.3M1218.0 799.4L1224.4 807.1M1226.3 793.1L1229.4 797.6M1235.0 787.5L1240.0 796.1M1244.3 782.7L1246.6 787.7M1253.9 778.7L1257.3 788.1M1263.8 775.6L1265.2 780.9M1274.0 773.3L1275.7 783.2M1284.3 772.0L1284.8 777.4M1294.7 771.5L1294.7 781.5M1305.1 772.0L1304.6 777.4M1315.4 773.3L1313.7 783.2M1325.6 775.6L1324.2 780.9M1335.5 778.7L1332.1 788.1M1345.1 782.7L1342.8 787.7M1354.4 787.5L1349.4 796.1M1363.1 793.1L1360.0 797.6M1371.4 799.4L1365.0 807.1M1379.1 806.4L1375.2 810.3M1386.1 814.1L1378.4 820.5M1392.4 822.4L1387.9 825.5M1398.0 831.1L1389.4 836.1M1402.8 840.4L1397.8 842.7M1406.8 850.0L1397.4 853.4M1409.9 859.9L1404.6 861.3M1412.2 870.1L1402.3 871.8M1413.5 880.4L1408.1 880.9"/><path d="M1294.7 890.8L1230.4 796" stroke="#5e5a38"/></g><path d="M1269.3 813.7V809.5H1273.5M1282.1 809.5H1286.3V813.7M1286.3 822.3V826.5H1282.1M1273.5 826.5H1269.3V822.3" fill="none" stroke="#9a9458" stroke-width="0.9"/><text x="1287.5" y="828.7" font-family="Liberation Sans,sans-serif" font-size="6.8" fill="#8a8648">R</text><path d="M1343.5 821.3000000000001V817.1H1347.7M1356.3 817.1H1360.5V821.3000000000001M1360.5 829.9V834.1H1356.3M1347.7 834.1H1343.5V829.9" fill="none" stroke="#9a9458" stroke-width="0.9"/><text x="1361.7" y="836.3000000000001" font-family="Liberation Sans,sans-serif" font-size="6.8" fill="#8a8648">M</text><path d="M1211.5 880.7V876.5H1215.7M1224.3 876.5H1228.5V880.7M1228.5 889.3V893.5H1224.3M1215.7 893.5H1211.5V889.3" fill="none" stroke="#9a9458" stroke-width="0.9"/><text x="1229.7" y="895.7" font-family="Liberation Sans,sans-serif" font-size="6.8" fill="#8a8648">Y</text><path d="M1360.5 893.7V889.5H1364.7M1373.3 889.5H1377.5V893.7M1377.5 902.3V906.5H1373.3M1364.7 906.5H1360.5V902.3" fill="none" stroke="#9a9458" stroke-width="0.9"/><text x="1378.7" y="908.7" font-family="Liberation Sans,sans-serif" font-size="6.8" fill="#8a8648">B</text><path d="M1228.5 953.2V949.0H1232.7M1241.3 949.0H1245.5V953.2M1245.5 961.8V966.0H1241.3M1232.7 966.0H1228.5V961.8" fill="none" stroke="#9a9458" stroke-width="0.9"/><text x="1246.7" y="968.2" font-family="Liberation Sans,sans-serif" font-size="6.8" fill="#8a8648">G</text><path d="M1302.5 959.7V955.5H1306.7M1315.3 955.5H1319.5V959.7M1319.5 968.3V972.5H1315.3M1306.7 972.5H1302.5V968.3" fill="none" stroke="#9a9458" stroke-width="0.9"/><text x="1320.7" y="974.7" font-family="Liberation Sans,sans-serif" font-size="6.8" fill="#8a8648">C</text><g fill="none" stroke="url(#trc)" stroke-linecap="round" opacity="0.88"><path d="M1286.5 806C1284.5 815 1283 830 1283.5 841C1284 855 1285 865 1286.5 873C1288 880 1290 884 1291.5 888C1294 895 1297 898 1298.8 902C1301 915 1302 925 1302.8 933C1304 945 1306 957 1307 963L1308 975" stroke-width="1.5"/><path d="M1287 808C1287.5 820 1288.5 832 1289.6 841C1290.5 852 1291.5 862 1292.7 871.6C1293.5 878 1294.5 884 1295.5 889C1296.5 895 1297.5 900 1298.8 905C1300 915 1301.5 925 1303 935C1304.5 948 1305.5 958 1306.5 966" stroke-width="1.1" opacity=".85"/><path d="M1285 812C1284.5 826 1285.5 842 1287 856C1288.5 868 1290.5 878 1293 887C1296 897 1299 910 1300.5 922C1302 940 1304 955 1305.5 968" stroke-width="0.8" opacity=".55"/></g><circle cx="1286.6" cy="806.3" r="2.3" fill="#e02028"/><path d="M1303.5 970L1307 968.5L1308.5 975.5" fill="none" stroke="#48d0b0" stroke-width="1"/></svg>
<svg style="left:33.5px;top:1054.5px" width="15" height="15" viewBox="0 0 15 15"><circle cx="7.5" cy="3.600" r="3.100" fill="#f2f2f2"/><circle cx="3.500" cy="10.800" r="3.100" fill="#f2f2f2"/><circle cx="11.500" cy="10.800" r="3.100" fill="#f2f2f2"/><circle cx="7.500" cy="8.300" r="2" fill="#f2f2f2"/></svg>
<span class="t b" style="left:54px;top:1063.5px;font-size:9.7px;color:#e4e4e6;letter-spacing:0.02px">DaVinci Resolve Studio 19</span>
<div class="abs" style="left:190px;top:1056.3px;width:65px;height:14.4px;background:#b3433a;border:1px solid #c4554a;border-radius:1.5px;color:#f0c8c2;font-size:5.8px;font-weight:bold;letter-spacing:0.9px;line-height:12.4px;text-align:center">PUBLIC BETA</div>
<svg style="left:682px;top:1048.5px" width="16" height="14" viewBox="-0.5 -0.5 14 13"><rect x="0.500" y="1.500" width="12" height="9" rx="1" fill="none" stroke="#7a7a7e"/><path d="M0.500 4H12.500" stroke="#7a7a7e"/><path d="M2.500 8.500H5.500" stroke="#7a7a7e"/></svg>
<span class="t" style="left:690px;top:1070.800px;transform:translate(-50%,-50%);font-size:9.500px;color:#7c7c80">Media</span>
<svg style="left:772px;top:1048.5px" width="16" height="14" viewBox="-0.5 -0.5 14 13"><path d="M4 1.500H13L11.500 9.500H2.500Z" fill="none" stroke="#7a7a7e"/><path d="M0 3.500H3M0 5.500H2.500M0 7.500H2M8 0V11" stroke="#7a7a7e" stroke-width="0.900"/></svg>
<span class="t" style="left:780px;top:1070.800px;transform:translate(-50%,-50%);font-size:9.500px;color:#7c7c80">Cut</span>
<svg style="left:862px;top:1048.5px" width="16" height="14" viewBox="-0.5 -0.5 14 13"><path d="M6.500 0V11" stroke="#7a7a7e"/><path d="M1.500 2.500H5M8 2.500H11M0 5.500H5M8 5.500H13M2.500 8.500H5M8 8.500H10.500" stroke="#7a7a7e" stroke-width="1.600"/></svg>
<span class="t" style="left:870px;top:1070.800px;transform:translate(-50%,-50%);font-size:9.500px;color:#7c7c80">Edit</span>
<svg style="left:952px;top:1048.5px" width="16" height="14" viewBox="-0.5 -0.5 14 13"><path d="M3.500 10.500L9.500 2.500L11 3.500L5 11Z" fill="#7a7a7e"/><path d="M2 2L3 3M6 0.500V2M9 0.500L8.500 1.500M12 6H13" stroke="#7a7a7e" stroke-width="0.900"/></svg>
<span class="t" style="left:960px;top:1070.800px;transform:translate(-50%,-50%);font-size:9.500px;color:#7c7c80">Fusion</span>
<div class="abs" style="left:1005.5px;top:1044px;width:89px;height:36px;background:#000;border-bottom:2px solid #d0434a"></div>
<svg style="left:1042px;top:1047.5px" width="16" height="16" viewBox="0 0 13 13"><circle cx="6.50" cy="1.70" r="1.000" fill="#e85a9a"/><circle cx="9.89" cy="3.11" r="1.000" fill="#e8d24a"/><circle cx="11.30" cy="6.50" r="1.000" fill="#5ad27a"/><circle cx="9.89" cy="9.89" r="1.000" fill="#4aa8e8"/><circle cx="6.50" cy="11.30" r="1.000" fill="#9a6ae8"/><circle cx="3.11" cy="9.89" r="1.000" fill="#e8704a"/><circle cx="1.70" cy="6.50" r="1.000" fill="#d8d8d8"/><circle cx="3.11" cy="3.11" r="1.000" fill="#4ad2c8"/><circle cx="8.06" cy="4.94" r="0.700" fill="#e85a9a"/><circle cx="8.06" cy="8.06" r="0.700" fill="#5ad27a"/><circle cx="4.94" cy="8.06" r="0.700" fill="#4aa8e8"/><circle cx="4.94" cy="4.94" r="0.700" fill="#e8d24a"/></svg>
<span class="t b w" style="left:1050px;top:1070.800px;transform:translate(-50%,-50%);font-size:9.500px">Color</span>
<svg style="left:1132px;top:1048.5px" width="16" height="14" viewBox="-0.5 -0.5 14 13"><path d="M4.500 9V2L11 0.500V7.500" fill="none" stroke="#7a7a7e" stroke-width="1.100"/><ellipse cx="3" cy="9.300" rx="2" ry="1.500" fill="#7a7a7e"/><ellipse cx="9.500" cy="7.800" rx="2" ry="1.500" fill="#7a7a7e"/></svg>
<span class="t" style="left:1140px;top:1070.800px;transform:translate(-50%,-50%);font-size:9.500px;color:#7c7c80">Fairlight</span>
<svg style="left:1222px;top:1048.5px" width="16" height="14" viewBox="-0.5 -0.5 14 13"><path d="M12.500 0.500C8.500 0.500 5.500 3 4 6.500L6.500 9C10 7.500 12.500 4.500 12.500 0.500Z" fill="none" stroke="#7a7a7e"/><path d="M4 6.500L1.500 6L3.500 4M6.500 9L7 11.500L9 9.500M2 9.500L0.500 12.500L3.500 11" fill="none" stroke="#7a7a7e" stroke-width="0.900"/><circle cx="9.300" cy="3.700" r="1" fill="#7a7a7e"/></svg>
<span class="t" style="left:1230px;top:1070.800px;transform:translate(-50%,-50%);font-size:9.500px;color:#7c7c80">Deliver</span>
<svg style="left:1851px;top:1058.500px" width="10" height="9" viewBox="0 0 11 10"><path d="M5.500 0L11 5H9.500V10H6.800V6.500H4.200V10H1.500V5H0Z" fill="#8e8e92"/></svg>
<svg style="left:1888px;top:1057px" width="12" height="12" viewBox="0 0 12 12"><rect x="4.900" y="-0.200" width="2.200" height="2.600" fill="#8e8e92" transform="rotate(0 6 6)"/><rect x="4.900" y="-0.200" width="2.200" height="2.600" fill="#8e8e92" transform="rotate(45 6 6)"/><rect x="4.900" y="-0.200" width="2.200" height="2.600" fill="#8e8e92" transform="rotate(90 6 6)"/><rect x="4.900" y="-0.200" width="2.200" height="2.600" fill="#8e8e92" transform="rotate(135 6 6)"/><rect x="4.900" y="-0.200" width="2.200" height="2.600" fill="#8e8e92" transform="rotate(180 6 6)"/><rect x="4.900" y="-0.200" width="2.200" height="2.600" fill="#8e8e92" transform="rotate(225 6 6)"/><rect x="4.900" y="-0.200" width="2.200" height="2.600" fill="#8e8e92" transform="rotate(270 6 6)"/><rect x="4.900" y="-0.200" width="2.200" height="2.600" fill="#8e8e92" transform="rotate(315 6 6)"/><circle cx="6" cy="6" r="3.300" fill="none" stroke="#8e8e92" stroke-width="1.800"/></svg>
<div id="winb"></div>
</body></html>
